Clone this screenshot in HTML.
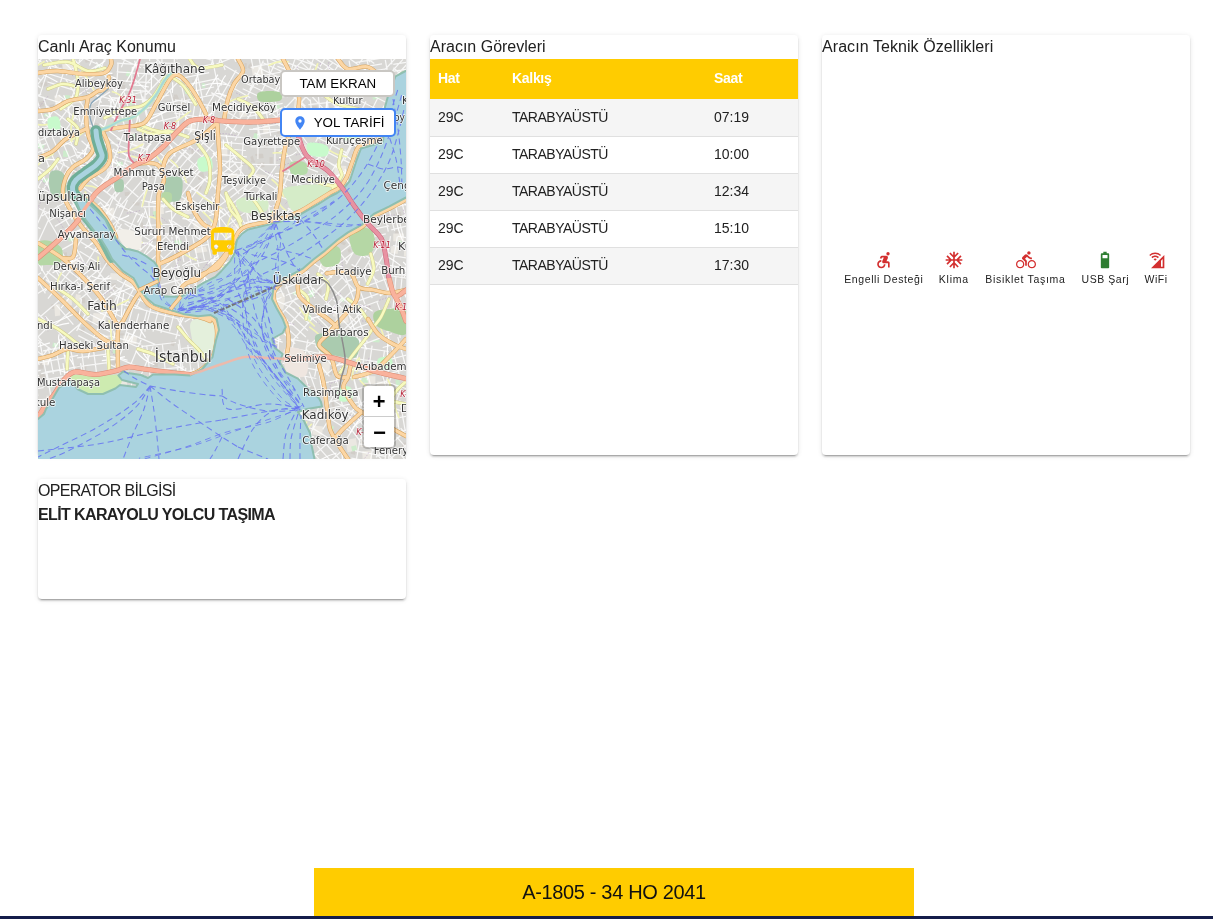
<!DOCTYPE html>
<html lang="tr">
<head>
<meta charset="utf-8">
<title>Araç Bilgisi</title>
<style>
html,body{margin:0;padding:0;}
body{width:1213px;height:919px;position:relative;overflow:hidden;background:#fff;
  font-family:"Liberation Sans",sans-serif;color:#212121;}
.card{position:absolute;background:#fff;border-radius:4px;
  box-shadow:0 3px 1px -2px rgba(0,0,0,.2),0 2px 2px 0 rgba(0,0,0,.14),0 1px 5px 0 rgba(0,0,0,.12);}
.card,#bar{will-change:transform;}
#map{will-change:auto;}
.title{position:absolute;left:0;top:0;height:24px;line-height:24px;font-size:16px;white-space:nowrap;color:#212121;}
#c1{left:38px;top:35px;width:368px;height:420px;}
#c2{left:430px;top:35px;width:368px;height:420px;}
#c3{left:822px;top:35px;width:368px;height:420px;}
#c4{left:38px;top:479px;width:368px;height:120px;}
#map{position:absolute;left:0;top:24px;width:368px;height:400px;overflow:hidden;background:#ddd9d2;}
.mbtn{position:absolute;background:#fff;color:#000;font-size:13.33px;white-space:nowrap;box-sizing:border-box;text-align:center;}
#b1{left:242.3px;top:10.6px;width:115px;height:27.7px;border:2px solid #c9c7c3;border-radius:5px;line-height:23.7px;}
#b2{left:242.1px;top:49px;width:115.5px;height:29.4px;border:2px solid #4285f4;border-radius:5px;}
#b2 svg{position:absolute;left:9.5px;top:4.9px;}
#b2 span{position:absolute;left:31.6px;top:0;line-height:25.4px;}
#zoomc{position:absolute;left:324px;top:325px;width:30px;height:60.5px;border:2px solid rgba(0,0,0,.2);border-radius:5px;background-clip:padding-box;background:#fff;background-clip:padding-box;}
.zb{position:relative;width:30px;height:30px;box-sizing:border-box;text-align:center;font-family:"Liberation Mono",monospace;font-weight:bold;font-size:22px;line-height:30px;color:#000;}
#zin{border-bottom:1px solid #ccc;height:30.5px;}
.zb span{position:absolute;left:0;width:30px;top:2.5px;}
#zout span{top:3px;left:0.5px;}
#thead{position:absolute;left:0;top:24px;width:368px;height:40px;background:#ffcc00;color:#fff;font-size:14px;font-weight:bold;}
#thead span{position:absolute;top:0;line-height:38px;}
.row{position:absolute;left:0;width:368px;height:36px;border-bottom:1px solid #e0e0e0;font-size:14px;color:#212121;}
.row.odd{background:#f5f5f5;}
.row span{position:absolute;top:0;line-height:36px;white-space:nowrap;}
.row.lo span{top:-1px;}
.c-a{left:8px;}.c-b{left:82px;}.c-c{left:284px;}
.row .c-b{letter-spacing:-0.5px;}
#thead span{letter-spacing:-0.3px;}
.feat{position:absolute;top:214.5px;width:120px;margin-left:-60px;text-align:center;font-size:10.5px;color:#212121;white-space:nowrap;}
.feat svg{display:block;margin:0 auto;width:20px;height:20px;}
.feat div{line-height:13px;margin-top:3.5px;}
#bar{position:absolute;left:314px;top:868px;width:600px;height:48px;background:#ffcc00;text-align:center;
  line-height:48px;font-size:20px;color:#111;letter-spacing:-0.34px;}
#foot{position:absolute;left:0;top:916px;width:1213px;height:3px;background:#141d4a;}
</style>
</head>
<body>

<div class="card" id="c1">
  <div class="title">Canlı Araç Konumu</div>
  <div id="map">
    <svg id="mapsvg" width="368" height="400" viewBox="0 0 368 400" style="position:absolute;left:0;top:0;display:block"><rect width="368" height="400" fill="#d8d7d4"/><path d="M229.2 296.7l6.0 1.0l-1.0 6.7l-6.0 -1.0zM339.4 11.6l4.3 0.6l-0.6 6.7l-4.3 -0.6zM331.5 45.3l4.3 0.2l-0.2 3.2l-4.3 -0.2zM211.2 5.2l3.1 1.7l-1.7 3.4l-3.1 -1.7zM281.8 63.8l6.0 0.5l-0.5 2.7l-6.0 -0.5zM46.6 0.7l6.4 -1.1l1.1 3.0l-6.4 1.1zM361.5 349.0l3.4 0.2l-0.2 6.8l-3.4 -0.2zM249.4 81.9l6.7 1.9l-1.9 5.5l-6.7 -1.9zM328.9 119.5l3.8 -1.4l1.4 2.8l-3.8 1.4zM24.0 120.5l5.0 0.7l-0.7 2.0l-5.0 -0.7zM124.3 124.0l6.1 -0.7l0.7 4.4l-6.1 0.7zM177.1 281.9l2.3 -1.9l1.9 6.9l-2.3 1.9zM275.9 338.0l2.1 -0.5l0.5 5.9l-2.1 0.5zM212.9 3.6l2.2 1.8l-1.8 2.9l-2.2 -1.8zM72.3 302.3l6.6 -0.6l0.6 6.7l-6.6 0.6zM130.6 209.9l5.9 1.0l-1.0 2.5l-5.9 -1.0zM293.4 343.9l2.2 -1.6l1.6 6.7l-2.2 1.6zM125.4 244.3l6.6 1.7l-1.7 3.7l-6.6 -1.7zM200.6 125.0l3.6 -1.7l1.7 2.9l-3.6 1.7zM54.8 275.7l7.0 -1.8l1.8 2.8l-7.0 1.8zM363.1 213.4l4.0 0.4l-0.4 3.2l-4.0 -0.4zM304.1 182.3l4.1 1.7l-1.7 2.3l-4.1 -1.7zM12.0 197.4l6.2 0.9l-0.9 2.7l-6.2 -0.9zM349.5 252.2l5.9 -0.3l0.3 2.5l-5.9 0.3zM54.9 337.9l3.5 2.0l-2.0 4.3l-3.5 -2.0zM313.6 390.4l4.3 0.9l-0.9 4.4l-4.3 -0.9zM176.3 116.4l4.0 -0.5l0.5 2.7l-4.0 0.5zM363.7 383.9l5.1 -0.6l0.6 4.5l-5.1 0.6zM32.8 108.9l5.9 -0.6l0.6 6.3l-5.9 0.6zM289.3 310.0l5.5 1.0l-1.0 5.3l-5.5 -1.0zM133.7 281.8l3.4 1.1l-1.1 4.4l-3.4 -1.1zM254.2 117.5l6.7 0.3l-0.3 5.2l-6.7 -0.3zM4.3 218.8l3.3 -0.1l0.1 5.4l-3.3 0.1zM300.5 259.0l6.0 0.6l-0.6 3.7l-6.0 -0.6zM271.5 331.3l3.8 1.5l-1.5 6.2l-3.8 -1.5zM253.3 390.4l6.8 0.1l-0.1 4.6l-6.8 -0.1zM61.2 334.6l6.7 0.8l-0.8 4.4l-6.7 -0.8zM264.8 292.1l2.9 0.3l-0.3 5.9l-2.9 -0.3zM244.9 168.3l5.1 0.5l-0.5 5.9l-5.1 -0.5zM265.1 11.0l2.8 0.6l-0.6 4.2l-2.8 -0.6zM80.6 274.4l5.2 -0.1l0.1 2.2l-5.2 0.1zM83.3 21.7l2.7 -1.3l1.3 3.6l-2.7 1.3zM71.2 14.3l4.3 0.4l-0.4 3.9l-4.3 -0.4zM217.2 95.1l6.5 -0.4l0.4 2.0l-6.5 0.4zM102.5 164.0l2.6 -0.5l0.5 6.2l-2.6 0.5zM13.3 245.4l2.5 -0.6l0.6 4.7l-2.5 0.6zM213.8 383.3l6.1 1.3l-1.3 4.1l-6.1 -1.3zM236.4 147.8l2.7 0.3l-0.3 5.0l-2.7 -0.3zM352.3 387.2l5.0 1.6l-1.6 3.8l-5.0 -1.6zM0.3 43.2l4.8 -1.4l1.4 5.1l-4.8 1.4zM231.6 356.5l3.9 -1.1l1.1 4.2l-3.9 1.1zM107.3 389.0l3.9 1.7l-1.7 6.8l-3.9 -1.7zM219.3 103.9l6.9 -0.3l0.3 4.5l-6.9 0.3zM117.4 393.7l4.5 -0.1l0.1 3.4l-4.5 0.1zM44.9 248.7l4.2 1.1l-1.1 3.5l-4.2 -1.1zM304.3 5.3l4.7 1.7l-1.7 3.4l-4.7 -1.7zM287.7 98.3l3.3 2.0l-2.0 2.8l-3.3 -2.0zM107.9 243.2l4.4 0.4l-0.4 5.2l-4.4 -0.4zM273.6 47.3l5.8 0.1l-0.1 3.5l-5.8 -0.1zM123.7 118.7l4.6 -0.6l0.6 4.3l-4.6 0.6zM274.2 236.3l2.2 -0.2l0.2 3.3l-2.2 0.2zM337.3 355.2l4.7 1.1l-1.1 2.1l-4.7 -1.1zM157.4 230.3l5.5 -0.1l0.1 5.2l-5.5 0.1zM335.5 154.2l4.0 -1.2l1.2 6.3l-4.0 1.2zM109.1 332.0l2.3 0.8l-0.8 6.2l-2.3 -0.8zM159.3 114.5l5.9 -1.4l1.4 6.6l-5.9 1.4zM176.1 219.6l4.5 -1.4l1.4 3.7l-4.5 1.4zM215.6 324.7l2.3 1.3l-1.3 3.2l-2.3 -1.3zM291.4 265.4l2.1 1.9l-1.9 5.6l-2.1 -1.9zM367.4 280.5l2.2 -1.1l1.1 6.2l-2.2 1.1zM237.6 380.9l5.6 -0.8l0.8 2.7l-5.6 0.8zM337.8 59.9l5.1 -1.4l1.4 4.1l-5.1 1.4zM229.0 17.4l2.5 -1.7l1.7 3.9l-2.5 1.7zM21.2 230.1l5.7 -1.5l1.5 6.4l-5.7 1.5zM158.9 125.8l5.0 1.8l-1.8 4.4l-5.0 -1.8zM137.7 22.3l5.5 0.5l-0.5 2.8l-5.5 -0.5zM186.2 364.2l4.8 -0.9l0.9 5.1l-4.8 0.9zM203.0 101.7l5.8 -1.5l1.5 4.6l-5.8 1.5zM86.3 148.5l5.7 0.9l-0.9 2.9l-5.7 -0.9zM241.0 34.1l5.3 -1.5l1.5 2.5l-5.3 1.5zM218.6 95.4l6.4 -0.7l0.7 4.4l-6.4 0.7zM293.1 11.8l5.6 -1.4l1.4 2.3l-5.6 1.4zM350.4 272.4l3.1 1.9l-1.9 2.6l-3.1 -1.9zM244.7 328.2l2.7 -0.6l0.6 5.1l-2.7 0.6zM86.5 133.3l5.1 -0.5l0.5 3.7l-5.1 0.5zM50.2 332.4l5.2 -0.3l0.3 6.0l-5.2 0.3zM313.4 207.0l5.0 1.0l-1.0 4.9l-5.0 -1.0zM145.5 38.8l2.2 -1.8l1.8 3.0l-2.2 1.8zM327.2 192.4l5.8 -0.1l0.1 2.0l-5.8 0.1zM327.4 247.8l4.1 -1.6l1.6 4.3l-4.1 1.6zM56.9 63.6l3.9 1.5l-1.5 3.9l-3.9 -1.5zM56.0 101.6l3.4 -0.9l0.9 2.8l-3.4 0.9zM86.5 192.8l2.2 -0.5l0.5 6.6l-2.2 0.5zM345.2 275.1l5.4 1.8l-1.8 4.4l-5.4 -1.8zM43.4 267.4l3.5 0.9l-0.9 5.4l-3.5 -0.9zM60.1 80.4l2.1 -1.7l1.7 3.2l-2.1 1.7zM147.6 389.4l3.8 -0.1l0.1 3.6l-3.8 0.1zM104.2 292.9l5.6 -1.0l1.0 2.8l-5.6 1.0zM247.4 376.2l5.2 1.9l-1.9 4.2l-5.2 -1.9zM2.3 24.3l5.9 -1.8l1.8 4.1l-5.9 1.8zM201.8 395.8l4.6 -1.6l1.6 3.8l-4.6 1.6zM26.2 359.5l4.5 -1.8l1.8 6.7l-4.5 1.8zM89.6 20.2l4.0 -1.0l1.0 2.3l-4.0 1.0zM149.9 122.4l2.3 1.9l-1.9 2.2l-2.3 -1.9zM66.0 203.5l4.0 -1.7l1.7 4.7l-4.0 1.7zM115.5 43.2l4.7 0.4l-0.4 6.6l-4.7 -0.4zM315.3 85.8l2.1 -0.1l0.1 4.7l-2.1 0.1zM210.3 150.7l5.1 1.7l-1.7 5.6l-5.1 -1.7zM113.2 179.6l6.1 -1.5l1.5 3.1l-6.1 1.5zM114.7 35.1l5.9 -0.7l0.7 6.1l-5.9 0.7zM47.8 32.8l3.2 -0.3l0.3 2.4l-3.2 0.3zM212.3 98.2l2.3 -1.8l1.8 5.5l-2.3 1.8zM73.5 114.4l3.9 -0.3l0.3 2.5l-3.9 0.3zM115.5 300.9l4.8 0.6l-0.6 6.5l-4.8 -0.6zM279.6 229.9l4.2 0.6l-0.6 6.1l-4.2 -0.6zM351.4 291.2l5.5 1.2l-1.2 3.3l-5.5 -1.2zM140.7 52.1l2.3 -0.9l0.9 2.8l-2.3 0.9zM248.7 114.2l2.3 0.2l-0.2 5.8l-2.3 -0.2zM10.1 20.3l2.7 1.4l-1.4 3.8l-2.7 -1.4zM349.3 244.8l3.2 -0.6l0.6 4.1l-3.2 0.6zM121.6 5.0l4.9 0.9l-0.9 6.1l-4.9 -0.9zM35.1 212.1l2.9 -0.2l0.2 5.5l-2.9 0.2zM345.4 317.9l2.6 1.7l-1.7 3.6l-2.6 -1.7zM169.6 173.7l4.2 1.7l-1.7 5.8l-4.2 -1.7zM196.0 387.9l5.0 1.3l-1.3 2.5l-5.0 -1.3zM154.4 20.9l6.9 0.3l-0.3 2.2l-6.9 -0.3zM177.4 352.7l4.0 -0.9l0.9 3.1l-4.0 0.9zM74.0 225.0l3.8 -1.0l1.0 5.8l-3.8 1.0zM129.5 99.3l6.9 1.4l-1.4 6.2l-6.9 -1.4zM227.5 160.3l2.7 -0.0l0.0 6.2l-2.7 0.0zM13.9 67.8l2.5 1.6l-1.6 5.6l-2.5 -1.6zM73.3 318.8l3.6 1.5l-1.5 5.4l-3.6 -1.5zM229.3 320.1l3.9 0.0l-0.0 2.1l-3.9 -0.0zM215.9 73.9l3.9 -1.9l1.9 3.6l-3.9 1.9zM114.8 153.1l4.4 -0.4l0.4 5.5l-4.4 0.4zM361.5 326.2l6.6 0.7l-0.7 5.5l-6.6 -0.7zM197.5 319.5l3.8 0.7l-0.7 5.0l-3.8 -0.7zM192.2 113.7l2.4 -0.6l0.6 2.4l-2.4 0.6zM213.6 303.8l5.6 1.7l-1.7 3.5l-5.6 -1.7zM101.1 286.4l2.4 0.7l-0.7 5.8l-2.4 -0.7zM352.1 358.9l5.4 1.0l-1.0 6.2l-5.4 -1.0zM224.8 83.5l4.6 -1.0l1.0 6.5l-4.6 1.0zM358.7 217.6l4.0 -0.4l0.4 2.0l-4.0 0.4zM65.6 261.2l6.5 0.5l-0.5 6.6l-6.5 -0.5zM142.3 43.6l5.4 0.9l-0.9 4.8l-5.4 -0.9zM137.6 354.7l3.1 -0.9l0.9 3.5l-3.1 0.9zM229.0 358.9l2.8 1.1l-1.1 5.2l-2.8 -1.1zM82.7 25.1l4.8 1.5l-1.5 6.2l-4.8 -1.5zM267.9 166.7l4.1 1.6l-1.6 4.6l-4.1 -1.6zM111.3 112.3l5.0 -1.3l1.3 6.8l-5.0 1.3zM11.2 46.2l4.8 -1.3l1.3 5.0l-4.8 1.3zM70.0 237.8l5.2 0.9l-0.9 5.5l-5.2 -0.9zM22.6 193.9l6.2 -0.7l0.7 6.8l-6.2 0.7zM312.9 258.1l6.6 0.8l-0.8 3.1l-6.6 -0.8zM309.4 190.7l2.5 -1.4l1.4 3.0l-2.5 1.4zM34.2 60.8l5.1 1.0l-1.0 2.5l-5.1 -1.0zM270.9 326.5l6.0 1.7l-1.7 5.6l-6.0 -1.7zM352.1 250.0l6.8 -1.6l1.6 2.5l-6.8 1.6zM23.7 82.6l3.9 0.7l-0.7 4.3l-3.9 -0.7zM273.4 33.5l4.0 -0.5l0.5 4.7l-4.0 0.5zM43.3 238.8l3.9 -0.0l0.0 5.4l-3.9 0.0zM354.3 378.0l2.4 0.9l-0.9 5.8l-2.4 -0.9zM108.9 46.7l4.4 0.9l-0.9 3.8l-4.4 -0.9zM338.0 152.8l3.5 0.8l-0.8 4.5l-3.5 -0.8zM290.4 230.3l3.5 1.4l-1.4 3.7l-3.5 -1.4zM191.1 20.2l4.1 0.7l-0.7 3.2l-4.1 -0.7zM27.0 108.4l2.5 1.9l-1.9 4.4l-2.5 -1.9zM199.2 154.5l6.7 -0.6l0.6 2.5l-6.7 0.6zM298.4 2.0l5.8 -1.9l1.9 3.8l-5.8 1.9zM92.3 183.3l3.9 -1.8l1.8 4.6l-3.9 1.8zM80.4 389.7l4.2 -1.7l1.7 4.4l-4.2 1.7zM102.7 381.9l5.4 -1.8l1.8 4.5l-5.4 1.8zM144.5 311.4l4.2 1.6l-1.6 5.0l-4.2 -1.6zM237.4 254.3l2.2 1.1l-1.1 2.1l-2.2 -1.1zM152.1 349.7l6.1 -0.5l0.5 6.6l-6.1 0.5zM367.7 302.5l6.5 1.1l-1.1 2.7l-6.5 -1.1zM155.3 388.8l7.0 -0.3l0.3 3.1l-7.0 0.3zM99.7 187.9l3.4 -1.5l1.5 5.3l-3.4 1.5zM62.3 183.1l2.4 1.6l-1.6 3.9l-2.4 -1.6zM325.8 78.6l2.1 1.8l-1.8 6.1l-2.1 -1.8zM220.4 54.5l3.2 1.8l-1.8 6.6l-3.2 -1.8zM11.4 73.9l4.1 1.0l-1.0 3.3l-4.1 -1.0zM137.2 310.1l2.8 1.9l-1.9 4.6l-2.8 -1.9zM258.3 36.0l2.6 -0.5l0.5 5.2l-2.6 0.5zM135.7 191.1l4.9 -1.0l1.0 6.8l-4.9 1.0zM209.3 105.2l4.7 -1.5l1.5 5.7l-4.7 1.5zM177.1 282.3l2.0 -0.3l0.3 5.9l-2.0 0.3zM185.5 244.2l6.0 0.0l-0.0 2.3l-6.0 -0.0zM14.1 154.2l3.7 -0.8l0.8 2.1l-3.7 0.8zM165.6 262.0l6.6 0.1l-0.1 3.9l-6.6 -0.1zM262.4 374.9l6.7 -0.8l0.8 6.9l-6.7 0.8zM61.3 372.8l2.4 0.9l-0.9 4.2l-2.4 -0.9zM194.6 155.5l6.6 0.2l-0.2 3.5l-6.6 -0.2zM305.3 55.2l3.8 0.3l-0.3 4.5l-3.8 -0.3zM76.3 181.6l2.3 -0.6l0.6 2.4l-2.3 0.6zM52.9 387.0l3.3 1.1l-1.1 3.4l-3.3 -1.1zM272.7 104.8l6.1 -0.4l0.4 5.1l-6.1 0.4zM231.4 98.3l3.3 -0.2l0.2 6.4l-3.3 0.2zM330.2 70.8l2.7 1.0l-1.0 2.3l-2.7 -1.0zM206.5 3.9l2.2 -0.0l0.0 6.1l-2.2 0.0zM320.6 15.9l4.9 0.9l-0.9 2.6l-4.9 -0.9zM225.0 244.8l3.1 -1.6l1.6 6.7l-3.1 1.6zM23.6 273.6l2.5 -0.2l0.2 2.3l-2.5 0.2zM238.8 356.8l5.6 0.6l-0.6 2.3l-5.6 -0.6zM310.5 48.2l5.8 -0.8l0.8 3.3l-5.8 0.8zM0.6 303.3l4.6 -0.1l0.1 6.5l-4.6 0.1zM57.2 86.6l3.3 -1.2l1.2 6.7l-3.3 1.2zM32.5 141.1l2.4 0.5l-0.5 4.1l-2.4 -0.5zM239.4 69.9l2.7 0.7l-0.7 4.5l-2.7 -0.7zM164.6 229.3l6.6 -0.9l0.9 2.7l-6.6 0.9zM181.7 214.4l6.5 0.6l-0.6 4.8l-6.5 -0.6zM154.4 313.7l6.2 -1.6l1.6 3.5l-6.2 1.6zM95.4 143.0l6.4 0.5l-0.5 3.3l-6.4 -0.5zM235.8 382.5l2.6 -0.7l0.7 5.8l-2.6 0.7zM37.9 252.8l6.2 -1.8l1.8 4.9l-6.2 1.8zM357.7 153.7l5.2 -1.0l1.0 5.6l-5.2 1.0zM150.3 131.7l2.5 0.9l-0.9 2.3l-2.5 -0.9zM151.1 347.9l2.3 -1.3l1.3 3.5l-2.3 1.3zM347.2 316.2l6.5 -1.6l1.6 4.5l-6.5 1.6zM153.1 90.5l2.1 -0.8l0.8 4.8l-2.1 0.8zM39.7 204.6l6.7 -0.1l0.1 6.7l-6.7 0.1zM37.8 307.5l2.6 -1.7l1.7 4.7l-2.6 1.7zM363.3 217.1l4.2 0.2l-0.2 3.4l-4.2 -0.2zM358.0 171.1l3.0 1.7l-1.7 4.6l-3.0 -1.7zM140.5 253.5l6.6 1.2l-1.2 3.6l-6.6 -1.2zM194.7 55.8l2.3 -0.1l0.1 6.7l-2.3 0.1zM163.1 367.0l4.9 -0.9l0.9 4.5l-4.9 0.9zM273.9 102.5l4.4 0.4l-0.4 5.8l-4.4 -0.4zM49.4 81.1l5.5 -1.6l1.6 5.6l-5.5 1.6zM367.1 53.4l2.8 -0.2l0.2 2.4l-2.8 0.2zM228.0 342.9l2.8 -1.6l1.6 5.5l-2.8 1.6zM213.6 100.8l3.8 0.9l-0.9 2.3l-3.8 -0.9zM45.0 305.7l3.7 0.6l-0.6 5.0l-3.7 -0.6zM179.8 349.5l6.6 -0.7l0.7 3.4l-6.6 0.7zM322.7 53.1l4.1 1.9l-1.9 4.1l-4.1 -1.9zM47.2 262.0l5.8 -2.0l2.0 5.6l-5.8 2.0zM347.3 125.0l6.3 -0.3l0.3 5.3l-6.3 0.3zM308.3 270.3l3.7 0.0l-0.0 5.7l-3.7 -0.0zM261.9 245.8l6.0 -0.0l0.0 2.8l-6.0 0.0zM0.4 316.3l5.9 -1.8l1.8 6.2l-5.9 1.8zM197.0 191.4l2.6 1.9l-1.9 3.0l-2.6 -1.9zM313.8 95.3l6.1 -0.5l0.5 5.3l-6.1 0.5zM237.3 91.6l3.4 0.6l-0.6 2.1l-3.4 -0.6zM214.0 297.4l4.5 -0.8l0.8 4.2l-4.5 0.8zM270.6 149.1l5.0 -0.2l0.2 5.8l-5.0 0.2zM252.5 24.6l3.3 -1.4l1.4 6.2l-3.3 1.4zM20.9 5.8l5.8 -0.2l0.2 2.5l-5.8 0.2zM161.3 321.2l4.4 -1.9l1.9 4.6l-4.4 1.9zM292.7 307.0l5.1 0.5l-0.5 6.2l-5.1 -0.5zM263.5 340.4l5.1 1.5l-1.5 2.1l-5.1 -1.5zM364.1 80.5l2.3 -1.6l1.6 3.7l-2.3 1.6zM135.9 35.7l3.1 -0.3l0.3 2.0l-3.1 0.3zM110.4 291.5l3.9 1.8l-1.8 2.8l-3.9 -1.8zM329.2 275.7l3.1 -0.2l0.2 4.0l-3.1 0.2zM150.4 10.5l4.3 0.8l-0.8 5.8l-4.3 -0.8zM316.6 273.2l5.8 1.7l-1.7 6.4l-5.8 -1.7zM291.8 166.4l5.3 1.5l-1.5 5.3l-5.3 -1.5zM262.6 177.4l3.0 -1.0l1.0 3.6l-3.0 1.0zM250.9 307.8l3.0 1.4l-1.4 4.7l-3.0 -1.4zM134.6 37.9l5.0 -1.4l1.4 3.8l-5.0 1.4z" fill="#cfcac4" opacity=".8"/><path d="M87.6 217.7l8.3 0.5l-0.5 10.4l-8.3 -0.5zM24.1 5.3l12.5 -1.1l1.1 7.3l-12.5 1.1zM366.4 188.1l12.5 0.6l-0.6 9.3l-12.5 -0.6zM55.4 253.9l12.8 1.0l-1.0 9.7l-12.8 -1.0zM247.1 25.6l11.8 -0.8l0.8 10.3l-11.8 0.8zM11.4 346.2l9.3 1.5l-1.5 11.5l-9.3 -1.5zM262.8 368.4l8.6 -0.2l0.2 12.2l-8.6 0.2zM344.3 351.5l5.9 -1.1l1.1 6.2l-5.9 1.1zM355.3 174.5l10.6 0.0l-0.0 7.7l-10.6 -0.0zM142.0 140.4l10.3 1.6l-1.6 10.3l-10.3 -1.6zM251.0 371.6l12.7 0.7l-0.7 13.9l-12.7 -0.7zM60.0 344.3l13.7 0.3l-0.3 13.1l-13.7 -0.3zM262.7 84.4l12.5 -0.9l0.9 10.2l-12.5 0.9zM23.4 341.6l13.9 1.2l-1.2 5.8l-13.9 -1.2zM151.0 60.3l7.6 1.5l-1.5 11.9l-7.6 -1.5zM16.3 245.8l5.4 -0.7l0.7 11.5l-5.4 0.7zM324.2 392.3l9.5 -0.8l0.8 14.0l-9.5 0.8zM28.3 239.9l5.3 -0.4l0.4 6.8l-5.3 0.4zM224.7 62.5l5.4 -0.7l0.7 12.8l-5.4 0.7zM352.8 358.7l8.4 0.1l-0.1 9.1l-8.4 -0.1zM237.0 238.3l10.0 1.8l-1.8 10.6l-10.0 -1.8zM186.6 172.5l11.5 -0.8l0.8 7.1l-11.5 0.8zM359.8 208.5l9.9 -0.3l0.3 5.1l-9.9 0.3zM213.4 8.0l10.5 -1.8l1.8 10.7l-10.5 1.8zM230.9 186.5l11.1 0.8l-0.8 8.2l-11.1 -0.8zM271.6 8.9l5.5 1.9l-1.9 11.1l-5.5 -1.9zM92.4 182.5l10.3 -0.5l0.5 7.9l-10.3 0.5zM115.1 147.7l10.4 -0.5l0.5 7.7l-10.4 0.5zM284.2 10.8l10.1 -0.8l0.8 11.6l-10.1 0.8zM81.9 321.5l7.1 -0.3l0.3 6.7l-7.1 0.3zM256.9 40.7l7.9 1.3l-1.3 8.0l-7.9 -1.3zM161.3 342.2l6.5 0.6l-0.6 8.0l-6.5 -0.6zM325.6 180.4l7.0 0.1l-0.1 6.1l-7.0 -0.1zM70.2 322.7l12.5 -0.9l0.9 6.7l-12.5 0.9zM297.1 256.8l12.3 -1.5l1.5 8.1l-12.3 1.5zM107.4 317.5l7.4 -0.3l0.3 8.1l-7.4 0.3zM154.5 163.8l13.3 -2.0l2.0 6.4l-13.3 2.0zM347.1 352.0l13.9 1.8l-1.8 8.9l-13.9 -1.8zM341.3 88.8l11.7 0.7l-0.7 12.5l-11.7 -0.7zM191.0 115.6l8.1 -1.7l1.7 7.0l-8.1 1.7zM216.6 114.8l12.3 1.6l-1.6 5.4l-12.3 -1.6zM255.3 369.5l13.1 0.3l-0.3 13.1l-13.1 -0.3zM4.8 298.1l6.5 0.7l-0.7 7.7l-6.5 -0.7zM193.2 165.5l13.5 -0.6l0.6 10.5l-13.5 0.6zM92.9 344.7l9.3 -0.6l0.6 12.0l-9.3 0.6zM72.6 213.9l12.4 1.2l-1.2 6.5l-12.4 -1.2zM339.2 322.4l12.4 0.5l-0.5 5.1l-12.4 -0.5zM317.4 20.0l7.4 0.1l-0.1 7.4l-7.4 -0.1zM155.7 189.2l12.0 -1.8l1.8 5.0l-12.0 1.8zM46.7 49.9l5.6 1.4l-1.4 13.8l-5.6 -1.4zM31.7 200.8l7.8 -0.6l0.6 7.8l-7.8 0.6zM238.1 234.6l8.2 -0.7l0.7 6.7l-8.2 0.7zM45.5 222.2l11.4 -1.7l1.7 8.4l-11.4 1.7zM65.7 149.3l10.4 -0.5l0.5 12.0l-10.4 0.5zM294.8 249.2l8.9 -0.0l0.0 8.4l-8.9 0.0zM258.7 168.2l11.2 -1.0l1.0 9.1l-11.2 1.0zM197.2 278.1l5.6 -0.3l0.3 8.8l-5.6 0.3zM323.7 374.6l8.4 1.2l-1.2 13.1l-8.4 -1.2zM96.5 185.7l6.1 0.6l-0.6 12.3l-6.1 -0.6zM326.5 317.0l11.0 0.3l-0.3 11.6l-11.0 -0.3zM38.0 235.1l5.0 1.1l-1.1 6.3l-5.0 -1.1zM16.3 36.7l5.9 -1.3l1.3 12.9l-5.9 1.3zM8.6 336.6l6.1 0.7l-0.7 12.6l-6.1 -0.7zM307.7 381.0l10.2 -1.9l1.9 12.2l-10.2 1.9zM282.4 204.5l11.4 1.0l-1.0 6.0l-11.4 -1.0zM343.9 24.5l7.9 1.3l-1.3 10.1l-7.9 -1.3zM89.1 71.9l7.2 1.0l-1.0 10.5l-7.2 -1.0zM144.9 147.0l8.6 -0.3l0.3 8.2l-8.6 0.3zM30.6 200.1l13.8 1.0l-1.0 8.7l-13.8 -1.0zM59.1 276.3l11.8 0.1l-0.1 11.1l-11.8 -0.1zM178.0 257.2l13.1 -1.6l1.6 6.3l-13.1 1.6zM275.3 366.6l9.7 0.9l-0.9 9.0l-9.7 -0.9zM68.5 106.9l6.8 -0.7l0.7 10.3l-6.8 0.7zM85.5 276.5l13.6 0.8l-0.8 7.7l-13.6 -0.8zM152.1 341.5l10.3 -1.1l1.1 7.4l-10.3 1.1zM8.5 191.8l8.4 -0.6l0.6 6.6l-8.4 0.6zM118.5 309.7l6.3 -0.1l0.1 13.9l-6.3 0.1zM220.4 187.2l12.5 0.2l-0.2 12.4l-12.5 -0.2zM177.1 288.3l12.7 0.9l-0.9 8.6l-12.7 -0.9zM353.4 187.0l7.1 0.9l-0.9 7.1l-7.1 -0.9zM248.5 383.5l12.7 -1.2l1.2 7.2l-12.7 1.2zM95.2 74.9l11.3 1.6l-1.6 12.7l-11.3 -1.6zM93.8 346.0l7.8 0.9l-0.9 8.8l-7.8 -0.9zM31.6 37.1l12.5 -0.6l0.6 7.6l-12.5 0.6zM213.6 270.2l5.1 -0.3l0.3 8.0l-5.1 0.3zM178.8 84.0l10.3 -0.4l0.4 13.6l-10.3 0.4zM200.3 47.7l7.5 -1.5l1.5 11.0l-7.5 1.5zM326.5 363.5l5.9 -0.5l0.5 13.5l-5.9 0.5zM284.3 302.9l7.7 0.6l-0.6 11.1l-7.7 -0.6zM296.6 106.2l11.8 0.7l-0.7 13.7l-11.8 -0.7z" fill="#ebe8e2"/><path d="M166.5 223.9l6.7 0.0l-0.0 4.6l-6.7 -0.0zM216.2 73.9l4.8 1.2l-1.2 5.3l-4.8 -1.2zM34.6 121.4l2.9 0.8l-0.8 6.1l-2.9 -0.8zM15.4 392.9l6.8 0.5l-0.5 5.4l-6.8 -0.5zM58.0 6.0l4.9 -1.2l1.2 2.8l-4.9 1.2zM89.0 12.0l4.6 1.4l-1.4 4.5l-4.6 -1.4zM191.0 256.1l4.7 -0.2l0.2 5.5l-4.7 0.2zM102.4 399.1l7.0 0.8l-0.8 6.3l-7.0 -0.8zM116.0 91.9l3.8 1.1l-1.1 2.8l-3.8 -1.1zM147.3 338.6l4.2 1.4l-1.4 6.8l-4.2 -1.4zM0.2 83.9l6.6 1.9l-1.9 4.6l-6.6 -1.9zM146.3 29.2l5.3 -0.9l0.9 6.0l-5.3 0.9zM32.1 133.0l6.8 -1.5l1.5 5.9l-6.8 1.5zM90.7 40.4l2.8 -1.3l1.3 6.1l-2.8 1.3zM205.8 179.0l3.4 -1.5l1.5 5.8l-3.4 1.5zM236.9 46.6l4.4 -0.9l0.9 3.5l-4.4 0.9zM357.3 321.4l3.9 -1.2l1.2 6.5l-3.9 1.2zM145.1 341.8l5.4 2.0l-2.0 3.0l-5.4 -2.0zM78.5 103.3l6.0 -0.8l0.8 4.0l-6.0 0.8zM27.0 36.0l5.1 0.4l-0.4 3.6l-5.1 -0.4zM136.8 181.3l6.8 0.3l-0.3 4.7l-6.8 -0.3zM318.9 73.1l3.2 1.3l-1.3 6.6l-3.2 -1.3zM91.8 75.9l5.8 -1.2l1.2 6.7l-5.8 1.2zM349.6 352.9l5.2 -1.6l1.6 4.4l-5.2 1.6zM14.2 385.1l3.6 -1.0l1.0 5.7l-3.6 1.0zM303.1 238.6l3.8 0.9l-0.9 3.3l-3.8 -0.9zM25.3 91.4l5.0 0.5l-0.5 6.3l-5.0 -0.5zM103.1 366.9l3.4 -0.9l0.9 2.6l-3.4 0.9zM164.0 24.2l3.3 0.3l-0.3 4.2l-3.3 -0.3zM48.4 144.9l6.5 0.6l-0.6 6.9l-6.5 -0.6zM254.4 233.8l3.1 -1.9l1.9 2.7l-3.1 1.9zM335.0 280.4l6.8 0.5l-0.5 2.6l-6.8 -0.5zM177.5 292.2l3.9 -1.7l1.7 7.0l-3.9 1.7zM201.0 294.8l6.6 0.8l-0.8 5.8l-6.6 -0.8zM291.9 366.0l4.1 1.6l-1.6 5.6l-4.1 -1.6zM320.6 166.9l6.1 0.3l-0.3 6.4l-6.1 -0.3zM230.0 152.9l5.1 -1.7l1.7 5.2l-5.1 1.7zM235.3 397.3l6.5 -0.4l0.4 5.8l-6.5 0.4zM270.5 232.4l4.5 -1.7l1.7 6.3l-4.5 1.7zM276.1 11.9l5.2 -1.1l1.1 4.7l-5.2 1.1zM257.0 198.9l5.3 -1.0l1.0 6.6l-5.3 1.0zM4.2 120.4l5.6 -1.3l1.3 3.4l-5.6 1.3zM333.3 264.0l4.5 -0.7l0.7 6.5l-4.5 0.7zM245.1 79.4l4.4 1.7l-1.7 6.1l-4.4 -1.7zM323.9 153.8l5.1 -1.5l1.5 3.9l-5.1 1.5zM182.7 334.8l6.3 1.8l-1.8 5.7l-6.3 -1.8zM101.9 67.7l4.5 -1.1l1.1 3.7l-4.5 1.1zM152.3 250.3l4.7 1.4l-1.4 3.9l-4.7 -1.4zM361.4 181.0l2.8 1.5l-1.5 2.6l-2.8 -1.5zM15.3 283.5l5.1 1.2l-1.2 3.9l-5.1 -1.2zM7.0 54.4l4.5 1.3l-1.3 2.6l-4.5 -1.3zM87.4 56.3l2.7 -0.2l0.2 5.3l-2.7 0.2zM231.8 262.0l6.1 0.7l-0.7 6.8l-6.1 -0.7zM73.4 190.1l3.3 -0.1l0.1 2.5l-3.3 0.1zM262.8 71.6l3.7 0.8l-0.8 4.1l-3.7 -0.8zM191.5 245.8l5.9 1.2l-1.2 4.3l-5.9 -1.2zM333.5 34.9l6.7 -1.5l1.5 5.8l-6.7 1.5zM166.9 250.2l6.6 0.3l-0.3 4.2l-6.6 -0.3zM323.6 318.7l6.7 0.6l-0.6 4.6l-6.7 -0.6zM75.4 288.8l6.2 0.9l-0.9 5.4l-6.2 -0.9zM78.5 360.0l6.9 0.1l-0.1 6.9l-6.9 -0.1zM291.0 128.2l6.6 -0.6l0.6 6.4l-6.6 0.6zM30.5 176.4l5.0 -0.1l0.1 6.0l-5.0 0.1zM10.5 323.7l2.8 -1.3l1.3 6.1l-2.8 1.3zM123.3 315.2l3.1 0.1l-0.1 3.2l-3.1 -0.1zM266.3 336.0l5.6 -0.0l0.0 6.8l-5.6 0.0zM349.3 34.4l3.5 -0.8l0.8 4.9l-3.5 0.8zM268.2 255.5l4.9 0.2l-0.2 6.3l-4.9 -0.2zM114.7 152.5l6.3 -1.2l1.2 6.6l-6.3 1.2zM313.1 387.4l4.9 -1.2l1.2 5.1l-4.9 1.2z" fill="#cdeccc"/><path d="M9.5 -9.6L-5.1 12.8M4.7 -18.5L-12.5 7.8M-5.4 -19.2L-20.8 4.3M-9.7 -29.0L-29.8 1.9M5.4 -10.4L-23.0 -28.9M3.4 2.9L-29.2 -18.4M-3.1 13.2L-35.4 -7.9M29.3 -32.3L54.0 -6.6M25.4 -23.5L46.7 -1.3M20.6 -15.6L42.8 7.5M8.5 -15.4L35.5 12.8M3.6 -7.7L25.5 15.1M30.6 -28.9L8.5 -7.8M39.8 -16.4L17.1 5.3M50.7 -5.6L28.1 16.1M52.5 -30.5L77.5 -19.6M51.0 -23.0L78.5 -11.0M45.2 -17.4L76.1 -3.9M45.3 -9.2L68.1 0.8M35.4 -5.4L69.5 9.5M55.4 -30.5L41.0 2.6M67.3 -29.7L51.5 6.6M75.3 -19.9L61.7 11.4M81.6 -32.2L110.7 -18.8M78.9 -23.1L110.0 -8.8M73.7 -15.1L104.0 -1.2M74.6 -4.4L103.0 8.7M85.3 -24.4L72.2 4.1M97.7 -23.2L83.3 8.3M106.6 -14.3L94.4 12.4M109.8 -34.0L138.4 -33.7M111.9 -24.5L140.3 -24.2M104.6 -15.1L135.8 -14.8M107.7 -5.5L144.8 -5.2M107.8 3.9L141.9 4.3M111.9 -27.9L111.6 1.9M124.3 -35.2L123.9 4.0M136.6 -29.6L136.3 3.6M188.1 -21.0L180.5 5.8M180.8 -20.6L173.3 5.7M168.9 -29.5L161.0 -1.7M161.2 -27.7L153.1 0.8M154.9 -30.9L147.0 -2.9M147.7 -31.0L138.8 0.5M186.0 -18.0L153.2 -27.3M178.8 -8.7L148.9 -17.2M173.7 1.1L148.0 -6.2M207.8 -6.8L178.1 5.3M210.9 -18.3L176.8 -4.4M199.5 -23.9L175.8 -14.2M197.2 -33.1L170.2 -22.1M210.2 -1.2L197.0 -33.6M197.8 2.7L185.3 -28.0M187.2 11.1L172.6 -24.8M239.9 -27.1L247.3 11.9M225.1 -21.3L231.8 14.0M217.9 -17.7L224.4 16.9M210.6 -14.3L215.2 9.8M242.9 -28.6L211.1 -22.6M244.7 -18.5L206.7 -11.3M248.9 -8.9L209.1 -1.3M246.1 2.1L212.6 8.4M251.4 11.5L213.7 18.6M251.2 -31.3L279.6 -21.1M249.1 -24.9L275.0 -15.6M245.6 -11.8L278.8 0.0M238.7 -7.1L275.8 6.1M235.2 -1.3L272.7 12.2M239.4 7.4L267.7 17.5M249.1 -28.8L238.5 0.8M264.8 -21.7L253.9 8.8M280.5 -14.5L269.8 15.4M287.6 -28.9L316.8 -10.5M282.7 -25.0L313.2 -5.8M277.8 -21.1L308.6 -1.7M272.9 -17.2L300.4 0.1M276.3 -8.0L303.8 9.3M273.9 -2.6L298.0 12.6M269.1 1.4L294.7 17.5M285.7 -26.5L268.7 0.4M297.2 -16.9L281.7 7.8M313.1 -14.4L294.7 14.9M349.3 -21.9L330.9 3.2M344.5 -27.7L321.1 4.5M337.3 -30.0L315.8 -0.5M331.0 -33.5L312.6 -8.3M325.9 -38.8L304.8 -9.9M353.6 -21.6L324.6 -42.8M346.5 -13.8L317.3 -35.1M342.8 -3.6L313.8 -24.7M336.3 4.6L306.9 -16.9M328.4 11.8L301.3 -8.0M392.3 6.6L354.4 12.4M383.4 1.0L355.3 5.3M389.3 -6.8L351.4 -1.1M384.9 -13.0L353.9 -8.4M386.7 -20.2L356.0 -15.6M380.0 -26.2L352.6 -22.0M386.7 -34.1L352.7 -29.0M388.7 1.7L384.3 -27.5M372.3 10.0L367.2 -23.9M353.9 5.4L349.9 -21.6M-17.1 5.5L3.2 21.5M-27.1 5.5L2.6 28.9M-29.5 11.4L-0.1 34.5M-29.3 19.4L-9.5 35.0M-35.8 22.1L-9.8 42.5M-37.0 28.9L-12.2 48.4M-15.7 1.6L-34.8 25.9M-5.9 10.8L-26.0 36.4M6.1 17.3L-17.2 46.9M7.4 5.2L46.0 17.3M5.4 13.1L36.8 23.0M9.4 22.8L36.4 31.3M0.2 36.9L31.4 46.7M10.8 7.9L1.8 36.6M26.1 11.6L17.6 38.7M42.4 12.1L32.3 44.1M72.0 32.9L51.3 46.1M68.9 26.2L46.2 40.7M63.1 21.2L40.6 35.7M65.0 11.4L38.7 28.2M59.6 6.2L30.6 24.8M78.4 34.4L58.4 3.2M63.5 43.7L44.1 13.4M47.8 51.6L27.9 20.6M78.9 4.2L108.8 6.2M78.6 12.9L113.5 15.1M76.6 21.4L112.4 23.7M76.2 30.1L111.6 32.4M73.7 38.6L112.3 41.1M80.1 4.3L78.1 35.8M94.4 7.9L92.4 38.8M108.9 6.6L106.6 43.6M140.2 22.7L118.3 46.0M137.5 14.8L117.5 36.1M133.7 8.2L107.8 35.7M125.9 5.8L107.0 25.9M120.7 0.6L97.2 25.6M142.4 22.3L116.1 -2.4M130.5 31.6L105.4 8.0M120.1 42.2L95.1 18.8M176.0 35.7L145.3 42.0M176.1 28.0L150.1 33.3M181.1 19.3L141.6 27.4M171.2 13.6L140.5 19.9M176.2 4.9L142.0 11.9M181.2 33.4L174.5 0.9M164.8 41.7L158.5 10.8M147.2 44.0L140.7 12.1M216.3 24.9L201.3 50.9M202.4 18.9L188.1 43.9M198.3 11.1L183.8 36.3M220.0 25.9L186.4 6.5M212.3 38.7L178.1 19.0M200.9 49.4L173.3 33.6M220.6 -5.5L254.5 10.4M224.0 3.2L251.8 16.3M220.4 8.6L248.2 21.7M216.5 13.9L244.0 26.9M215.5 20.6L241.2 32.7M207.9 24.2L241.6 40.0M204.7 29.8L235.9 44.5M225.4 1.6L211.7 30.7M237.9 2.5L222.1 36.1M245.6 13.6L232.1 42.5M262.7 2.8L282.3 21.4M256.5 6.9L276.9 26.2M253.8 14.4L273.9 33.4M245.0 16.1L272.6 42.2M240.6 21.9L267.5 47.3M265.8 0.1L241.6 25.7M275.8 9.5L248.7 38.1M283.6 21.2L260.0 46.2M318.9 30.2L291.0 55.7M312.7 23.7L291.1 43.5M307.5 16.4L283.6 38.3M299.6 11.6L278.2 31.2M294.7 3.9L270.8 25.8M319.7 25.9L295.3 -0.7M313.0 33.9L289.4 8.1M305.1 40.6L285.2 18.9M298.5 48.8L276.7 25.0M288.1 52.8L266.8 29.5M349.4 32.2L316.0 37.9M352.4 26.0L318.5 31.8M345.7 21.5L312.6 27.1M349.6 9.5L312.5 15.8M344.0 4.8L310.7 10.5M342.6 -0.7L317.0 3.7M352.0 28.0L347.3 0.8M334.7 33.6L328.7 -1.8M317.8 40.5L311.1 1.7M393.5 15.7L371.0 39.9M384.2 16.5L366.2 35.9M380.9 10.8L360.4 32.9M373.9 9.2L355.0 29.6M374.4 -0.6L352.3 23.2M365.0 0.4L347.2 19.6M360.8 -4.3L343.3 14.5M387.7 17.9L365.5 -2.7M378.0 29.7L355.5 8.8M368.7 41.8L340.0 15.2M5.3 37.9L14.0 64.2M-2.2 37.4L6.7 64.3M-9.9 36.3L0.9 69.1M-15.9 40.5L-4.9 73.7M-22.4 43.0L-12.1 74.0M-30.1 41.9L-19.7 73.4M-36.6 44.5L-23.9 83.0M3.3 35.2L-28.4 45.6M7.4 51.2L-23.4 61.3M13.6 66.5L-20.4 77.7M20.6 36.3L45.8 55.3M17.9 44.0L40.0 60.7M7.3 45.7L36.0 67.4M7.4 55.5L35.0 76.4M3.9 62.6L26.2 79.4M23.7 40.7L6.5 63.5M34.8 43.8L11.5 74.6M41.3 52.8L23.3 76.7M49.0 33.3L78.3 41.7M46.3 48.7L72.4 56.2M43.4 64.1L69.7 71.6M52.1 35.4L42.8 67.5M64.8 32.4L53.3 72.3M74.2 40.7L65.2 72.0M102.0 30.7L110.4 64.5M94.1 31.6L103.0 67.6M86.3 33.4L95.1 68.6M79.6 39.3L88.2 74.0M72.0 41.4L79.4 71.4M106.4 32.5L70.1 41.5M110.6 48.2L74.6 57.1M110.7 64.8L80.2 72.3M140.2 57.6L106.4 65.9M141.5 49.3L109.3 57.3M141.4 41.4L106.6 50.0M131.3 36.0L103.9 42.7M141.7 70.2L131.9 30.3M127.8 72.3L119.5 38.8M114.4 76.6L104.7 37.4M177.9 41.5L172.6 73.7M170.1 47.6L165.6 75.0M163.4 46.7L159.5 70.6M158.2 37.1L152.3 73.3M150.6 41.8L145.3 74.3M144.2 39.3L138.7 72.9M176.8 47.4L136.9 40.9M171.4 59.8L135.9 54.0M172.7 73.3L136.0 67.3M213.5 53.5L196.9 81.5M210.5 45.2L192.5 75.3M202.6 45.1L186.9 71.3M196.0 42.7L182.9 64.6M184.8 34.6L167.5 63.7M182.6 24.9L163.8 56.5M207.4 49.8L180.5 33.7M205.6 62.7L173.9 43.8M201.0 74.0L172.0 56.7M245.0 77.5L216.4 82.8M248.4 70.2L219.1 75.7M245.6 64.1L215.2 69.8M243.2 57.9L216.8 62.9M249.2 50.2L209.2 57.6M244.7 44.4L214.6 50.0M246.9 37.4L211.6 44.0M243.6 75.5L237.2 41.2M232.8 77.1L226.0 40.2M222.2 79.1L216.2 47.0M279.0 59.3L255.7 83.5M275.8 51.8L251.2 77.4M267.6 49.6L250.1 67.7M267.2 39.1L240.5 66.8M261.4 34.3L236.9 59.7M278.5 59.6L253.7 35.7M271.8 71.8L246.2 47.1M263.0 82.0L234.5 54.5M305.6 37.2L309.0 70.7M297.0 35.9L300.1 65.9M288.8 37.1L292.6 74.3M280.4 37.7L284.1 73.3M272.3 40.5L275.4 70.9M309.5 41.6L270.3 45.6M308.6 52.8L271.7 56.6M306.9 64.0L277.6 67.0M353.3 52.2L338.2 82.0M346.1 46.5L330.7 77.0M339.5 39.5L325.0 68.3M328.0 42.4L314.8 68.6M323.7 30.9L308.1 61.8M358.2 48.5L325.0 31.7M349.8 55.8L320.5 41.0M343.8 64.4L318.9 51.8M341.2 74.7L312.8 60.3M336.1 83.7L302.3 66.6M378.8 35.2L391.7 57.9M371.8 35.1L390.2 67.1M368.4 41.2L383.5 67.5M363.2 44.2L377.9 69.9M356.5 44.5L371.9 71.3M353.1 50.7L365.6 72.5M374.3 33.9L345.6 50.4M381.6 48.9L352.4 65.7M389.3 63.8L361.2 79.8M5.4 103.3L-24.5 114.0M9.2 96.0L-27.1 109.1M10.2 89.8L-26.3 102.9M8.1 84.6L-24.3 96.3M1.2 81.2L-29.2 92.1M4.2 74.2L-35.0 88.4M10.8 107.5L-2.0 72.2M-2.6 116.3L-14.0 84.6M-17.5 121.1L-28.9 89.4M27.7 71.2L39.8 99.5M20.9 74.3L34.3 105.4M13.2 75.4L27.0 107.3M5.2 75.4L20.3 110.7M-0.5 81.1L10.2 106.0M29.8 69.5L-0.0 82.3M35.2 82.1L7.4 94.1M38.1 95.8L9.2 108.2M60.3 70.1L80.7 88.3M55.5 74.7L79.4 96.0M46.7 75.7L76.5 102.2M43.5 81.8L69.0 104.5M43.8 90.9L63.5 108.4M39.4 95.9L61.9 115.9M34.4 100.3L58.5 121.7M61.0 74.9L39.9 98.5M71.5 79.1L48.6 104.8M76.3 89.7L53.3 115.5M78.5 79.4L109.3 90.9M73.0 83.6L104.5 95.2M76.6 91.1L107.9 102.7M75.7 97.0L98.5 105.4M66.1 99.6L98.9 111.8M72.3 108.1L99.0 118.0M85.4 74.7L74.1 105.1M95.7 79.6L84.3 110.4M106.1 84.2L93.1 119.3M153.4 95.1L129.0 124.6M148.5 91.0L126.9 117.0M144.0 86.4L118.2 117.4M134.5 87.7L117.3 108.6M134.6 77.6L110.0 107.3M128.8 74.6L106.1 101.9M123.7 70.7L100.3 98.9M153.4 98.0L124.4 74.0M138.2 107.6L115.7 88.9M128.9 122.1L103.6 101.1M181.9 89.5L158.6 116.1M175.9 83.9L151.1 112.3M170.7 77.3L150.1 100.9M159.3 77.8L140.2 99.8M154.0 71.4L133.1 95.3M178.9 95.8L155.0 74.9M168.6 101.6L145.7 81.6M163.6 111.9L136.8 88.5M176.7 76.1L211.7 79.2M178.6 82.6L211.0 85.5M179.8 89.0L207.9 91.5M175.1 94.9L208.9 97.9M178.3 101.4L206.4 104.0M170.6 113.3L209.1 116.8M182.2 77.8L179.5 108.2M193.6 82.0L191.0 111.1M205.6 79.8L202.5 114.9M245.6 73.0L245.4 103.9M237.1 76.0L236.9 105.3M220.1 69.9L219.9 100.1M243.9 70.5L211.1 70.3M246.0 88.1L212.6 87.8M241.9 105.6L209.6 105.3M282.8 97.5L255.5 117.2M281.7 86.9L253.2 107.5M270.9 71.9L240.7 93.6M264.9 64.8L234.6 86.7M278.7 97.5L261.8 74.0M269.1 103.7L251.5 79.4M262.8 114.5L242.6 86.5M287.3 64.0L319.0 80.6M285.9 72.6L314.5 87.6M278.9 78.3L308.6 93.9M275.0 85.6L301.1 99.3M270.6 92.7L299.0 107.5M289.3 60.6L271.1 95.5M301.9 71.5L285.0 103.7M314.7 82.0L302.4 105.4M350.1 85.6L335.5 116.0M342.1 83.5L328.8 111.1M337.1 75.0L320.9 108.7M329.7 71.7L314.4 103.5M320.4 72.2L306.9 100.4M348.9 82.0L322.0 69.0M343.5 99.3L312.0 84.1M333.9 114.6L304.5 100.4M347.1 77.7L377.1 85.5M342.0 84.7L376.8 93.7M339.4 92.4L375.0 101.6M340.6 101.0L376.2 110.3M342.8 110.0L368.6 116.7M351.2 80.4L343.1 111.6M363.4 81.9L355.4 112.8M374.4 88.2L365.9 120.9M15.2 113.2L-3.6 146.7M6.3 117.0L-9.0 144.4M2.1 112.5L-12.0 137.8M-3.4 110.4L-16.1 133.1M-7.2 105.1L-21.5 130.8M-17.5 99.6L-33.7 128.6M9.4 113.8L-13.6 100.9M2.4 129.5L-26.4 113.4M-6.7 144.2L-33.8 129.0M49.8 120.2L33.3 148.9M46.3 115.0L27.3 147.9M42.1 110.9L23.3 143.5M35.3 111.2L21.6 135.0M30.1 109.0L15.2 134.8M25.4 105.8L11.3 130.3M18.6 106.3L6.8 126.8M47.5 118.3L19.0 102.0M38.5 131.1L14.4 117.3M33.6 146.3L4.2 129.4M56.1 113.9L81.5 131.6M48.0 119.1L77.7 139.9M41.2 125.2L70.7 145.9M56.6 106.1L36.9 134.3M71.8 112.6L52.1 140.8M83.3 124.3L64.9 150.6M112.3 126.2L89.9 152.4M105.9 119.3L80.9 148.6M100.7 111.0L76.9 138.8M88.7 110.7L69.4 133.2M82.7 103.3L59.7 130.2M113.1 126.6L86.8 104.0M100.5 138.2L72.1 113.9M88.2 150.1L62.8 128.3M139.7 120.8L132.8 150.8M134.0 113.4L125.7 148.9M126.7 112.4L119.4 143.6M118.9 113.8L112.2 142.3M112.5 109.1L103.4 148.3M139.0 120.9L107.7 113.6M141.5 135.7L107.8 127.9M137.7 149.1L102.9 141.1M185.2 127.0L165.9 153.8M173.6 127.1L155.2 152.6M167.6 119.3L148.6 145.7M161.6 111.6L142.6 138.0M154.5 105.4L135.0 132.6M179.1 130.1L153.1 111.4M174.6 143.3L145.8 122.5M167.6 154.7L138.5 133.7M218.4 125.6L188.6 149.1M211.9 123.2L190.0 140.4M211.6 115.9L186.5 135.6M203.2 114.9L175.8 136.5M204.8 106.2L177.3 127.8M198.1 103.8L169.9 126.0M196.2 97.8L166.2 121.4M212.3 124.4L194.1 101.2M201.2 134.9L179.3 107.0M190.3 145.7L167.8 117.2M218.0 106.8L248.8 127.8M216.9 116.2L239.4 131.6M206.6 119.3L232.7 137.1M205.7 128.9L231.9 146.7M224.3 104.2L205.2 132.2M238.1 106.8L218.2 136.1M246.6 117.3L229.5 142.3M254.0 102.7L280.1 113.2M248.7 110.5L278.0 122.2M246.6 119.5L272.9 130.0M239.8 126.7L269.0 138.4M241.9 137.4L268.9 148.2M255.5 102.7L242.6 134.9M267.5 106.6L254.7 138.6M277.8 115.0L264.8 147.5M324.0 120.5L305.1 150.2M316.4 118.4L297.7 147.8M308.3 117.3L290.0 146.1M301.0 114.8L283.3 142.8M298.8 104.5L279.0 135.7M324.1 124.5L292.5 104.5M316.8 140.1L288.3 122.0M308.3 154.9L279.5 136.6M346.2 102.1L352.5 135.5M340.7 108.9L345.6 134.5M333.8 107.7L339.8 139.6M327.8 111.9L332.7 137.9M320.2 107.6L327.2 144.2M314.2 111.2L320.7 145.9M307.1 109.8L314.4 148.2M345.7 108.2L307.6 115.4M343.9 121.5L312.6 127.4M347.5 133.8L315.7 139.8M361.0 106.0L392.0 118.4M356.4 112.3L387.0 124.5M349.5 125.8L379.0 137.5M345.4 132.3L379.0 145.7M362.4 102.9L350.2 133.6M374.7 109.9L363.8 137.2M386.4 118.3L375.0 146.9M12.1 157.3L-2.1 188.1M6.8 148.8L-9.3 183.5M-2.1 147.8L-16.3 178.5M-9.9 144.6L-26.1 179.4M-16.6 138.9L-31.4 170.9M16.3 156.7L-19.5 140.1M2.5 169.8L-28.1 155.6M-1.3 187.5L-32.1 173.2M53.3 164.0L23.9 181.3M43.6 160.7L21.2 173.9M41.1 153.1L16.9 167.4M38.5 145.7L9.0 163.0M32.8 140.0L3.9 157.0M48.7 167.2L32.8 140.1M38.1 178.4L19.3 146.6M22.3 180.9L5.7 152.7M62.7 143.8L81.4 164.9M54.4 145.4L78.5 172.8M47.7 148.9L72.5 177.0M45.5 157.5L68.0 182.9M40.8 163.3L60.1 185.1M63.1 143.0L41.1 162.5M74.2 149.6L50.0 171.1M79.4 161.6L52.1 185.7M111.9 158.8L98.6 188.6M107.6 151.4L95.3 178.9M99.2 153.2L85.4 184.3M89.5 140.8L72.9 178.2M82.9 138.6L69.7 168.4M76.1 136.9L62.1 168.4M108.6 158.8L77.8 145.1M105.6 170.4L69.6 154.5M94.9 178.6L64.8 165.3M143.2 174.4L106.0 175.7M139.3 165.2L105.0 166.5M141.0 146.6L104.5 147.9M134.4 177.0L133.1 142.4M123.3 176.6L121.9 137.7M112.0 172.1L110.9 142.0M153.0 128.9L185.1 150.6M148.5 137.2L179.9 158.5M140.7 154.8L167.3 172.8M134.8 162.3L164.7 182.5M153.2 131.8L132.6 162.2M166.8 143.4L147.2 172.4M180.7 154.7L162.9 181.1M199.9 141.6L217.4 165.2M189.0 140.6L213.4 173.4M185.5 149.4L205.9 176.9M179.5 155.0L200.1 182.7M174.8 162.2L189.2 181.6M197.8 134.6L172.3 153.6M204.6 142.4L175.8 163.8M208.7 152.2L182.4 171.7M216.4 159.2L186.1 181.7M221.9 167.9L193.4 189.0M237.1 141.4L243.5 177.0M229.9 143.9L236.1 178.9M221.9 142.1L228.5 178.8M215.5 148.9L221.3 181.5M207.6 147.7L212.7 176.5M240.3 146.1L208.8 151.7M238.1 158.4L207.4 163.9M247.1 168.6L214.2 174.5M266.5 131.3L291.0 149.6M261.3 134.9L289.1 155.8M259.9 141.5L285.5 160.6M252.2 143.2L284.0 167.0M249.8 149.0L277.3 169.5M247.3 154.6L272.6 173.5M243.7 159.5L271.6 180.4M267.3 129.3L243.1 161.6M276.4 142.2L258.4 166.2M289.5 149.8L267.1 179.7M308.9 138.5L309.6 172.8M303.1 144.7L303.6 170.9M297.2 143.6L297.8 173.5M291.2 139.7L292.0 176.1M285.4 144.0L286.1 178.2M279.5 141.7L280.1 172.8M273.6 139.9L274.3 179.3M309.5 145.6L271.1 146.4M312.2 158.1L277.6 158.8M308.5 170.7L277.7 171.3M347.8 174.9L322.8 180.1M351.1 166.9L318.7 173.6M349.9 159.8L315.8 166.8M342.2 146.8L318.9 151.6M350.3 172.7L344.0 141.7M336.5 178.8L329.8 146.4M322.9 186.1L315.2 148.4M377.0 137.7L384.6 167.6M371.2 143.4L378.1 170.7M363.8 143.0L372.0 175.6M357.0 144.8L365.2 177.5M350.6 148.2L356.6 171.9M384.4 141.3L346.5 150.8M384.0 152.3L349.8 160.9M390.0 161.7L353.3 170.9M-17.2 166.8L4.2 187.5M-19.3 175.8L-0.6 193.9M-24.0 182.3L-6.5 199.2M-35.2 182.5L-12.7 204.2M-39.1 189.8L-16.3 211.9M-16.6 168.1L-37.7 189.9M-2.9 177.4L-24.5 199.7M10.2 187.3L-13.7 212.0M42.3 198.6L14.5 213.9M38.9 182.4L7.7 199.6M35.7 175.1L1.8 193.7M47.0 205.4L29.7 173.8M33.5 210.3L20.5 186.7M21.5 218.0L4.6 187.2M54.2 169.9L81.1 186.7M48.9 176.7L77.2 194.3M43.1 183.1L73.9 202.3M41.6 192.2L62.2 205.0M32.8 196.8L58.3 212.7M49.4 170.9L34.9 194.3M64.5 178.7L47.1 206.7M80.7 184.8L60.1 217.8M86.6 164.4L112.4 181.6M79.2 167.0L106.5 185.1M81.3 175.8L104.1 191.0M78.7 181.5L101.6 196.7M68.8 182.4L100.9 203.7M68.7 189.8L97.3 208.8M62.0 192.7L93.3 213.6M83.5 165.2L65.3 192.6M100.1 171.9L78.1 205.1M114.6 181.9L94.0 212.9M144.9 192.2L120.2 214.7M140.3 186.4L110.2 213.7M129.3 186.4L107.7 206.0M130.1 175.7L100.9 202.2M122.2 172.9L101.5 191.7M145.7 197.1L119.6 168.3M131.2 205.9L110.7 183.3M118.7 216.9L96.0 191.9M173.8 167.9L181.3 204.5M166.3 165.4L174.5 205.8M160.3 170.5L166.5 201.0M153.6 172.1L160.9 207.8M147.5 176.9L153.3 205.3M140.3 175.7L145.9 203.2M133.7 178.0L139.4 205.8M168.5 168.9L137.5 175.2M170.3 185.3L143.2 190.8M180.5 200.0L147.3 206.7M215.1 174.6L209.7 209.0M206.3 175.7L201.5 205.3M198.5 170.0L192.4 208.1M189.6 170.9L184.0 206.2M181.5 167.4L175.2 206.6M218.3 178.2L178.9 172.0M209.0 192.1L175.1 186.7M211.1 207.8L173.0 201.8M234.6 169.5L252.4 196.8M224.7 169.0L241.9 195.4M217.3 172.3L235.3 199.9M212.3 179.4L229.0 205.0M202.9 179.5L223.7 211.6M231.9 170.4L204.7 188.1M244.9 177.2L210.2 199.7M245.7 191.8L218.8 209.3M282.1 193.3L256.2 215.7M278.7 184.9L249.2 210.5M257.7 169.2L233.6 190.1M281.0 194.0L258.1 167.5M271.2 207.3L245.3 177.4M256.3 214.7L233.4 188.2M316.8 191.9L290.7 212.4M315.9 182.9L285.6 206.7M308.5 169.3L281.3 190.8M320.3 196.1L300.6 171.0M309.8 204.0L290.7 179.7M302.1 215.5L280.2 187.7M349.8 189.3L329.3 222.2M343.2 182.9L323.7 214.1M333.0 182.1L317.3 207.3M326.5 175.4L307.9 205.2M357.1 197.5L327.2 178.9M343.8 206.7L315.6 189.1M340.0 221.8L313.6 205.4M392.6 183.4L386.4 221.7M385.9 182.4L379.6 221.7M378.7 184.8L374.1 213.0M372.2 182.5L366.2 219.4M359.3 177.5L353.7 211.9M352.5 177.2L347.1 210.8M387.9 181.7L359.8 177.2M391.4 192.4L355.1 186.6M389.3 202.3L355.9 196.9M383.4 211.5L349.7 206.1M379.9 221.1L350.3 216.3M-1.1 202.0L14.6 228.0M-11.1 203.7L7.4 234.4M-17.4 211.4L-3.1 235.1M-27.4 213.1L-10.8 240.5M-36.8 215.7L-17.1 248.2M-5.6 200.5L-33.5 217.3M3.1 213.8L-24.5 230.5M13.7 226.0L-15.8 243.8M20.9 203.7L45.6 223.5M18.2 210.6L36.6 225.4M8.8 212.3L32.9 231.5M7.7 220.5L30.7 239.0M20.5 200.7L-2.1 228.9M35.0 208.4L9.9 239.7M44.0 223.1L23.0 249.2M83.0 228.5L58.8 248.0M77.6 225.7L55.4 243.6M71.5 216.4L41.7 240.3M63.4 215.8L40.4 234.2M63.0 208.9L39.0 228.2M60.9 203.5L30.9 227.5M76.3 232.6L57.8 209.6M66.7 238.9L48.8 216.7M60.0 248.9L39.0 222.8M88.9 202.5L115.9 216.8M88.3 210.1L120.4 227.0M82.8 215.0L111.9 230.4M79.1 221.0L109.3 236.9M76.9 227.7L110.2 245.3M72.4 233.2L107.0 251.5M95.4 206.8L76.3 242.9M104.0 213.9L86.6 246.8M111.4 223.3L97.5 249.7M145.9 207.7L153.9 237.6M137.7 200.6L146.6 233.6M133.4 207.8L141.0 236.3M115.2 209.9L123.1 239.4M110.2 214.5L118.4 245.2M142.0 207.3L112.4 215.2M144.3 220.2L115.6 227.9M147.3 232.9L119.2 240.4M154.5 204.8L179.1 231.3M145.5 212.3L171.4 240.2M137.1 220.4L162.1 247.4M135.4 227.2L158.4 252.0M132.0 232.2L150.6 252.2M157.9 211.3L132.3 235.1M166.9 220.9L140.1 245.8M174.5 231.8L151.6 253.0M186.7 214.9L214.2 216.2M180.7 221.9L214.0 223.5M183.1 229.3L219.3 231.0M183.6 209.4L181.9 245.6M200.3 211.9L198.8 242.9M216.9 215.1L215.5 245.2M243.5 238.2L215.8 251.2M243.4 231.8L218.4 243.6M244.6 224.9L214.7 239.0M242.1 219.7L210.8 234.5M235.7 209.9L204.2 224.9M228.7 206.9L203.4 218.8M246.2 237.9L231.7 207.2M230.8 241.8L218.8 216.4M216.2 247.6L202.9 219.5M278.5 232.7L245.8 244.9M273.1 227.0L247.8 236.5M274.5 218.8L247.0 229.1M270.9 212.5L243.7 222.7M275.4 233.3L264.0 202.8M265.1 238.8L253.3 207.2M253.4 240.5L242.0 210.0M316.1 229.9L294.1 251.3M309.4 224.9L286.3 247.4M305.4 217.1L284.3 237.7M301.0 209.8L277.7 232.5M291.7 207.2L272.0 226.4M316.6 231.4L292.9 207.1M307.2 241.9L281.8 215.9M297.4 252.1L274.7 228.7M341.5 207.4L352.1 236.6M330.8 204.0L342.5 236.0M325.5 215.2L334.2 239.1M317.2 218.5L327.0 245.3M306.1 213.9L318.6 248.3M340.9 210.8L306.8 223.2M349.1 219.6L313.4 232.6M352.2 230.3L316.2 243.4M388.1 221.3L385.1 254.0M382.5 216.2L379.4 249.7M376.3 217.6L373.1 251.8M364.5 212.8L361.4 246.2M358.0 217.0L354.8 251.2M352.1 214.7L349.2 246.1M389.8 218.4L357.2 215.4M389.1 235.7L351.5 232.1M385.1 252.6L351.8 249.5M14.2 263.7L-14.0 291.9M3.8 263.6L-18.2 285.5M0.7 256.2L-24.9 281.7M-3.1 249.5L-27.2 273.6M-7.5 243.4L-33.5 269.3M11.4 266.1L-8.5 246.1M3.6 281.7L-19.8 258.3M-12.3 289.2L-34.0 267.5M29.9 234.9L48.2 256.4M24.7 241.0L43.4 262.9M18.3 245.8L35.4 265.7M7.4 257.3L28.0 281.3M30.5 233.5L2.5 257.5M40.6 245.5L16.3 266.3M51.6 256.7L23.9 280.5M59.1 245.4L83.9 258.3M50.1 247.5L77.5 261.8M50.8 254.7L82.0 270.9M48.4 260.3L73.9 273.6M48.2 267.0L69.8 278.2M39.5 269.3L68.1 284.2M40.3 276.6L65.2 289.5M54.1 242.2L38.6 271.9M70.6 249.2L55.3 278.6M83.1 264.0L70.9 287.5M109.2 251.0L101.6 279.9M100.7 254.7L93.2 283.5M94.8 248.4L86.3 280.7M86.9 249.7L79.7 277.1M79.5 249.3L72.0 277.8M113.6 253.0L80.9 244.4M107.8 269.0L72.2 259.6M103.2 285.2L72.6 277.2M147.2 242.6L137.7 280.1M138.0 246.8L131.5 272.4M130.6 243.6L122.9 273.9M123.0 241.4L115.0 272.6M116.2 235.8L106.8 272.7M146.2 245.0L111.9 236.3M142.8 260.5L112.4 252.8M142.1 276.7L103.6 266.9M171.6 240.6L190.1 270.4M167.2 245.4L183.7 272.0M161.7 248.4L181.4 280.1M156.2 251.4L174.1 280.3M152.2 256.7L167.6 281.6M138.9 259.0L157.1 288.4M170.6 248.2L146.7 263.0M180.5 256.8L153.9 273.3M183.3 269.8L155.8 286.8M204.7 241.3L220.8 266.7M197.9 242.9L217.0 273.0M193.3 248.0L210.4 275.0M187.6 251.3L201.4 273.0M182.7 256.0L196.6 277.8M173.1 253.3L194.2 286.5M201.2 243.5L173.1 261.4M211.3 251.9L179.9 271.9M215.9 263.8L188.3 281.3M239.6 239.1L224.0 272.3M222.6 237.4L211.6 260.9M257.3 250.5L225.1 235.4M248.7 265.0L213.5 248.5M243.1 280.9L205.5 263.4M256.1 234.6L279.1 255.5M255.5 242.2L279.1 263.6M250.7 246.1L271.0 264.5M246.8 250.7L269.9 271.6M239.9 252.7L267.9 278.0M238.6 259.8L260.3 279.4M233.3 263.2L257.2 284.8M258.3 238.6L238.3 260.7M268.2 247.0L245.2 272.5M275.0 258.9L254.0 282.0M300.2 234.0L324.3 258.4M295.7 240.7L319.0 264.3M287.9 244.1L315.4 271.9M283.2 250.6L310.8 278.5M278.6 257.2L303.5 282.3M304.0 239.2L283.3 259.7M313.7 246.2L288.7 271.1M323.1 253.6L300.3 276.2M338.9 242.9L349.1 270.6M317.4 251.1L329.5 284.0M310.7 255.0L321.6 284.7M340.5 242.0L310.0 253.3M345.0 259.2L315.5 270.1M353.9 274.7L318.5 287.8M376.1 283.1L349.1 286.4M380.2 268.7L348.3 272.6M381.0 261.6L343.7 266.2M376.4 248.3L341.0 252.7M373.4 276.6L369.9 248.8M362.2 278.8L358.0 244.7M351.1 281.6L346.7 246.2M-11.2 272.7L13.1 290.6M-17.2 280.0L9.0 299.4M-24.9 286.0L1.6 305.7M-29.6 294.4L1.3 317.2M-30.4 305.5L-7.2 322.7M-10.3 280.6L-30.2 307.5M1.7 282.7L-21.7 314.2M11.3 288.1L-11.9 319.3M31.0 282.2L37.2 314.4M23.1 279.4L29.8 313.9M16.8 284.2L22.9 316.1M10.3 288.6L15.4 314.9M1.9 283.1L9.5 322.0M32.9 286.5L5.1 291.9M40.1 296.4L-0.8 304.2M37.4 308.1L3.2 314.7M71.8 312.3L44.6 315.8M69.8 303.7L43.9 307.1M71.2 294.8L39.2 298.9M67.9 286.4L35.0 290.6M70.4 313.3L65.6 275.4M58.8 316.3L54.3 281.7M46.9 317.4L42.3 281.7M88.1 273.1L117.1 285.3M88.2 283.0L116.2 294.8M81.7 299.9L110.6 312.1M72.5 305.9L106.7 320.3M91.1 273.9L77.2 306.9M103.1 280.9L90.4 310.9M115.2 287.5L102.7 317.1M143.9 316.6L109.2 320.4M146.2 307.9L106.9 312.2M138.8 300.3L113.7 303.1M144.9 291.2L105.4 295.5M138.1 283.5L104.1 287.3M144.2 320.6L140.2 284.7M128.2 319.9L124.3 284.5M112.4 320.1L108.7 286.2M173.1 278.5L177.1 311.2M165.6 283.3L169.6 316.4M157.0 278.6L160.9 310.9M149.8 285.8L153.5 316.0M141.1 280.5L145.8 319.1M178.2 285.3L143.3 289.5M172.2 297.8L146.8 300.9M180.5 308.7L146.2 312.8M220.5 281.8L211.0 310.1M213.6 282.6L204.0 311.0M207.6 280.5L198.5 307.4M203.4 273.1L193.0 304.1M188.7 276.9L180.1 302.7M184.9 268.5L172.9 304.0M220.0 284.8L185.9 273.4M215.7 298.4L179.4 286.3M208.8 311.2L174.5 299.6M214.0 282.6L240.5 284.3M207.2 305.2L243.2 307.6M215.0 275.7L213.1 305.1M227.8 278.4L225.7 311.6M241.1 273.7L238.6 312.7M253.1 280.2L283.3 286.2M251.5 288.5L282.1 294.5M250.7 296.9L278.8 302.4M244.5 304.2L281.7 311.6M248.5 313.6L278.3 319.5M256.0 281.1L250.1 311.0M270.0 280.7L262.9 316.6M283.7 282.1L276.6 317.7M293.4 263.9L316.6 290.9M291.3 275.4L311.8 299.2M283.4 280.0L305.5 305.9M277.1 286.7L297.0 309.8M267.9 289.9L291.5 317.4M292.1 268.2L267.9 288.9M305.5 278.8L278.8 301.6M313.5 294.0L288.1 315.8M352.9 292.7L348.5 323.8M346.5 291.3L342.9 317.2M334.1 286.6L329.2 321.4M327.7 285.5L322.6 321.4M322.0 279.4L317.4 312.1M315.2 280.8L310.6 313.8M350.7 292.5L320.1 288.2M345.5 303.5L315.5 299.3M350.7 316.0L309.9 310.2M377.3 279.3L385.6 310.0M368.5 278.5L378.0 313.7M359.8 278.1L368.1 309.1M351.8 280.3L362.3 319.4M376.8 279.9L344.7 288.5M378.9 293.2L346.3 302.0M388.2 304.6L348.5 315.3M8.0 340.1L-25.5 344.6M-1.2 335.4L-27.2 339.0M5.7 328.6L-25.9 332.9M4.1 323.0L-28.5 327.4M2.8 311.4L-30.9 315.9M-0.8 306.0L-34.9 310.6M-0.2 337.2L-4.6 305.0M-12.1 346.1L-17.1 309.2M-25.8 341.7L-30.3 308.4M45.7 336.9L17.1 341.5M41.2 330.2L16.4 334.1M41.8 322.5L9.3 327.8M41.4 315.1L10.0 320.1M41.7 307.5L6.6 313.1M47.8 336.4L42.6 304.1M30.7 339.6L25.0 304.2M13.8 343.9L8.8 312.5M74.9 317.4L79.7 345.1M67.9 318.3L72.4 344.2M53.5 318.3L58.5 347.7M72.7 313.1L45.2 317.8M80.2 330.0L42.6 336.5M81.7 348.0L46.1 354.1M78.3 312.7L106.7 316.8M77.6 319.0L106.3 323.1M80.9 325.8L107.3 329.6M80.3 332.0L105.0 335.6M77.4 337.9L106.9 342.2M70.2 343.2L104.7 348.2M78.9 316.0L74.4 347.3M94.2 320.8L90.5 346.5M110.0 321.8L105.0 356.1M128.9 316.6L144.5 348.6M121.8 321.8L134.0 346.7M113.3 324.0L128.6 355.4M105.6 328.1L117.7 352.7M137.4 317.8L109.9 331.2M145.6 325.8L111.5 342.4M145.1 338.0L114.9 352.8M171.3 314.3L169.7 342.6M163.7 308.4L161.9 339.7M155.7 309.2L153.9 342.2M147.8 308.9L145.9 342.9M139.9 308.1L138.0 343.0M171.6 315.7L138.8 313.9M172.5 327.0L138.5 325.0M174.5 338.2L135.7 336.1M209.7 305.7L215.3 340.5M201.6 310.1L207.8 348.3M193.8 316.0L198.7 346.4M184.5 312.9L189.4 343.5M175.4 311.1L180.8 344.1M211.4 311.7L174.1 317.8M215.4 325.9L183.1 331.1M211.6 341.3L182.4 346.0M241.5 313.2L246.9 351.6M227.6 319.9L232.1 352.1M212.6 319.3L216.6 347.5M242.2 321.3L211.7 325.6M242.2 332.1L213.9 336.1M251.6 341.6L210.3 347.4M271.2 312.7L280.7 339.4M264.5 310.7L276.3 343.8M258.9 311.8L269.3 341.0M253.0 311.9L267.1 351.4M249.9 320.0L260.2 348.9M244.0 320.2L254.7 350.1M238.0 320.1L248.2 348.7M268.9 310.8L236.3 322.4M272.4 327.3L244.9 337.2M280.7 342.2L245.9 354.6M321.1 343.2L288.9 350.0M320.5 336.7L290.8 342.9M319.9 330.1L289.6 336.5M317.0 317.4L282.1 324.8M322.3 350.7L315.2 316.8M304.6 347.5L298.6 318.8M289.4 355.9L282.8 324.7M353.5 341.9L323.8 350.1M351.5 335.4L325.1 342.7M350.4 321.5L319.2 330.2M342.3 309.7L314.9 317.3M343.4 302.3L310.1 311.6M350.5 337.5L341.0 303.3M337.2 342.7L327.6 308.5M323.6 347.2L314.2 313.4M351.8 324.1L377.2 332.9M342.1 328.6L373.1 339.4M345.2 337.6L373.4 347.5M338.1 343.0L370.8 354.5M354.3 314.5L344.1 343.6M367.3 317.2L356.4 348.4M379.5 322.3L368.9 352.5M1.3 352.0L-5.7 389.7M-5.7 354.5L-11.9 387.6M-11.5 350.2L-17.5 382.0M-18.1 349.7L-24.2 382.6M-24.5 348.8L-30.2 379.2M7.0 361.0L-33.0 353.5M-2.2 371.2L-28.1 366.4M3.0 384.1L-37.7 376.5M21.2 341.9L45.7 356.9M16.6 348.7L44.2 365.6M14.0 356.7L44.5 375.5M12.1 365.3L40.1 382.4M3.4 369.5L36.2 389.6M22.1 339.8L5.6 366.7M37.8 347.0L17.7 379.8M51.9 356.7L32.7 388.0M60.7 338.4L89.2 358.6M52.5 343.9L80.6 363.8M50.6 353.9L74.8 371.1M48.8 364.0L70.5 379.4M60.6 337.1L41.1 364.7M75.8 346.6L55.3 375.6M87.5 361.0L67.1 389.7M104.7 344.2L114.3 368.7M97.1 347.0L108.9 377.2M88.9 348.2L99.2 374.6M80.8 349.7L92.8 380.7M73.4 353.1L85.7 384.7M104.1 345.9L78.1 356.0M109.2 355.8L74.7 369.2M117.5 364.4L83.2 377.7M148.1 372.0L119.8 387.1M145.5 359.1L113.7 376.1M142.5 353.5L108.3 371.9M134.2 350.9L103.3 367.5M132.6 344.6L102.6 360.7M144.6 376.2L126.6 342.5M132.6 378.9L115.9 347.7M121.3 382.9L105.0 352.7M154.8 345.1L181.5 354.7M151.9 351.5L179.1 361.4M147.7 357.6L172.5 366.5M142.6 363.3L171.9 373.9M145.1 371.7L171.0 381.1M156.5 341.1L143.4 377.1M167.7 345.4L154.3 382.3M179.2 348.8L168.2 379.1M224.0 362.3L199.1 387.1M217.7 360.5L196.3 381.8M217.8 352.2L189.3 380.6M202.3 343.4L182.3 363.2M201.1 336.4L177.9 359.5M226.1 360.8L201.7 336.2M219.2 368.1L195.8 344.5M211.6 374.6L187.0 349.9M205.4 382.6L181.9 359.0M199.1 390.4L172.3 363.5M213.0 346.7L245.1 351.0M209.8 352.0L243.3 356.4M214.7 358.3L241.8 361.9M206.9 363.0L244.3 368.0M210.0 369.1L243.3 373.5M203.5 379.6L237.7 384.2M213.3 346.9L209.2 377.9M228.0 347.7L223.7 380.1M242.1 353.0L238.0 383.9M251.5 340.3L279.4 348.1M252.1 348.1L283.4 356.9M246.7 354.3L277.4 362.9M245.8 361.7L275.3 370.0M243.2 368.7L276.0 377.9M251.5 335.2L241.1 372.5M265.3 344.3L256.6 375.4M281.8 343.5L272.6 376.4M319.9 361.8L305.0 385.5M314.6 354.4L295.5 384.9M298.2 348.9L284.7 370.3M295.0 338.2L273.6 372.2M322.8 358.5L296.0 341.8M313.7 373.3L280.9 352.7M303.4 387.3L275.7 369.9M331.1 334.4L349.7 358.8M326.9 338.9L344.7 362.0M322.6 343.2L343.8 370.8M319.2 348.6L337.5 372.5M313.7 351.4L329.5 371.9M309.2 355.4L329.9 382.3M303.6 357.9L322.4 382.5M334.4 336.1L306.3 357.7M343.6 346.2L314.6 368.4M349.1 359.1L320.5 381.1M373.6 340.8L379.3 372.8M368.0 342.7L373.1 371.6M361.8 341.4L367.1 371.1M356.3 343.5L362.2 376.8M350.0 341.7L355.9 374.2M345.3 348.5L350.0 374.8M338.7 344.4L344.2 375.5M373.8 342.0L340.5 348.0M375.7 355.9L342.6 361.8M377.1 369.8L342.0 376.1M6.4 389.1L-5.7 416.4M1.8 385.6L-12.6 418.2M-2.6 381.4L-17.6 415.6M-7.1 377.8L-20.9 409.0M-12.9 376.9L-25.6 405.8M-21.9 369.4L-37.7 405.3M4.2 385.1L-26.5 371.5M0.2 401.0L-31.5 387.0M-5.2 416.3L-37.9 401.9M49.7 396.7L25.2 420.5M43.7 390.5L22.7 411.0M41.7 380.4L18.0 403.5M30.8 379.1L12.8 396.6M29.9 367.8L0.7 396.3M46.8 393.3L23.7 369.6M37.8 405.2L14.3 381.0M26.9 415.2L6.5 394.2M70.0 376.9L68.3 410.4M62.6 379.1L60.9 410.6M55.0 383.4L53.7 408.6M69.0 380.4L36.3 378.7M71.8 396.3L38.9 394.6M72.7 412.1L38.8 410.3M85.7 379.2L109.2 395.6M77.4 382.6L110.1 405.5M78.1 392.3L100.7 408.1M72.5 397.5L97.3 414.9M64.1 400.8L94.2 421.9M89.5 376.9L68.8 406.4M97.2 389.5L81.0 412.6M110.9 393.5L88.7 425.3M148.7 407.1L119.3 418.0M146.2 400.2L122.7 408.9M142.9 393.6L118.2 402.7M144.3 385.2L116.1 395.6M144.8 377.1L107.1 391.1M151.9 411.2L140.1 379.4M136.8 411.4L127.3 385.6M124.5 419.0L111.3 383.1M183.5 395.7L166.6 428.3M179.6 390.8L161.5 425.8M172.2 392.7L158.8 418.7M169.2 386.1L153.1 417.3M161.6 388.5L148.9 413.1M157.2 384.7L143.4 411.4M154.2 378.2L137.0 411.3M181.1 397.9L148.4 381.0M172.0 409.3L143.0 394.3M166.8 422.7L140.4 409.0M216.6 405.6L181.5 414.1M217.9 393.9L180.3 403.0M215.1 388.8L177.8 397.9M212.3 383.8L178.4 392.0M206.4 379.5L175.1 387.1M211.1 372.7L180.0 380.2M214.9 405.0L206.4 369.8M199.2 406.0L193.2 381.1M185.0 413.1L177.2 380.7M248.6 378.8L251.2 408.4M242.6 381.3L245.6 415.9M236.3 379.7L239.1 412.3M230.6 385.6L232.8 410.8M224.0 381.8L226.8 413.1M218.3 387.5L220.7 414.6M212.0 385.9L214.2 411.6M243.7 382.2L209.7 385.1M247.7 396.8L210.9 400.0M247.2 411.8L213.9 414.7M248.9 385.0L274.5 387.5M246.6 392.0L281.0 395.3M242.8 398.9L275.9 402.0M243.0 406.1L278.6 409.5M241.9 413.2L270.0 415.8M248.5 381.9L245.4 414.3M261.4 383.2L258.0 418.7M274.5 382.7L270.8 421.8M295.9 382.4L312.7 401.2M286.7 383.5L311.3 411.2M279.3 386.8L306.4 417.3M273.5 391.9L294.8 415.8M269.6 399.1L292.5 424.8M297.5 377.1L272.7 399.2M304.4 391.3L282.8 410.5M317.4 400.1L287.0 427.1M321.8 384.8L352.0 390.3M317.0 391.9L347.7 397.4M313.3 399.1L352.6 406.2M314.2 407.2L342.7 412.4M314.7 415.3L349.2 421.5M321.8 381.7L315.9 414.3M334.6 390.0L329.9 416.0M349.6 385.9L343.7 418.6M362.7 369.2L385.3 394.9M358.6 377.8L377.2 399.0M350.0 381.4L372.0 406.4M340.8 384.2L366.0 412.8M335.9 391.8L357.9 416.9M362.6 376.5L337.9 398.2M375.7 379.4L345.7 405.7M379.8 390.1L355.1 411.8" fill="none" stroke="#fff" stroke-width="1.25" opacity=".8"/><path d="M119.2 60.3Q116.3 65.2 114.0 70.4M134.6 23.2Q135.0 28.5 134.3 33.9M25.7 36.3Q31.6 47.7 31.6 60.5M82.2 251.0Q72.2 253.5 62.0 254.3M359.3 18.6Q353.6 24.5 345.5 25.2M43.3 123.4Q37.4 126.5 32.2 130.6M235.1 149.0Q237.8 155.0 233.5 160.0M75.8 272.2Q76.9 279.9 79.3 287.4M166.8 119.9Q159.0 128.3 148.7 133.5M211.4 210.1Q201.3 216.1 190.0 218.9M360.7 47.2Q366.4 57.9 366.7 70.1M179.9 15.7Q173.4 25.6 168.0 36.2M322.2 125.5Q315.7 133.6 310.3 142.4M167.9 336.0Q158.5 336.3 149.6 339.2M22.3 280.6Q13.8 291.9 9.9 305.5M104.7 154.3Q102.4 159.0 99.5 163.3M61.8 46.8Q74.1 46.1 85.3 51.2M91.1 156.4Q86.0 159.0 80.6 160.9M202.2 353.4Q192.4 361.7 180.7 367.1M152.8 143.5Q141.1 151.0 127.4 153.2M64.8 92.8Q71.3 99.6 78.8 105.3M96.7 1.6Q98.3 9.8 100.9 17.7M350.7 276.2Q348.8 286.7 349.7 297.3M19.9 359.8Q8.4 366.2 0.0 376.2M144.4 159.6Q155.7 159.7 164.7 166.4M24.8 83.5Q33.6 84.3 38.9 91.4M0.1 60.5Q9.1 59.5 15.8 65.7M321.8 245.6Q328.8 247.8 334.7 252.2M134.0 49.1Q121.7 55.7 109.2 61.9M178.1 34.4Q186.3 35.1 193.4 39.5M305.0 64.6Q318.5 65.8 332.1 66.5M53.9 217.3Q63.3 221.9 73.4 218.9M317.7 278.5Q325.3 282.7 329.0 290.6M284.1 213.0Q279.4 219.8 271.8 223.2M298.6 394.0Q286.5 397.2 276.7 404.9M272.3 90.7Q275.6 99.1 271.4 107.1M10.3 111.8Q15.3 122.4 25.7 128.1M164.6 374.8Q151.0 376.4 137.4 375.8M81.1 90.7Q86.1 95.5 92.3 98.7M331.3 336.2Q329.6 347.2 332.7 357.9M31.2 264.2Q19.1 265.7 8.1 271.0M175.9 71.4Q168.1 74.4 163.3 81.2M357.6 158.3Q360.0 171.8 365.8 184.1M62.6 50.8Q73.1 59.0 85.9 62.8M53.8 330.6Q43.0 332.5 32.0 332.0M201.9 52.4Q215.6 54.2 229.4 53.6M193.8 373.4Q193.9 386.6 199.1 398.6M77.7 100.7Q81.5 106.9 86.3 112.1M95.4 167.6Q108.0 171.8 119.6 178.2M168.6 233.3Q159.2 232.7 151.8 238.5M184.6 212.7Q184.7 217.9 183.8 223.0M67.4 1.6Q62.2 5.6 56.8 9.3M266.9 222.6Q271.5 231.1 276.9 239.1M288.6 42.4Q289.0 49.9 285.9 56.7M284.2 203.1Q278.7 214.1 279.6 226.3M163.1 245.0Q161.4 254.6 162.8 264.2M166.5 213.3Q165.8 226.9 168.3 240.2M322.6 376.9Q326.9 386.6 336.3 391.5M309.1 54.9Q318.7 55.0 325.8 61.5M88.6 29.2Q79.7 38.0 76.3 50.0M56.8 286.4Q51.1 290.5 50.8 297.5M356.1 87.8Q347.6 89.2 339.1 90.4M364.3 333.0Q372.0 337.4 379.8 341.6M124.8 78.3Q134.2 85.9 137.2 97.7M203.9 176.2Q211.8 177.6 219.8 177.1M188.5 25.7Q176.3 22.5 164.3 26.8M38.6 106.2Q50.7 105.9 62.4 109.2M47.7 168.9Q36.3 174.2 23.9 175.7M55.0 367.7Q55.7 379.4 50.0 389.7M21.2 275.3Q19.1 281.6 23.8 286.3M233.5 320.7Q246.6 320.6 258.0 327.3M317.5 181.5Q319.3 191.9 327.2 199.0M98.6 51.7Q101.1 59.1 97.4 65.9M59.4 20.2Q66.6 23.5 72.0 29.4M279.5 116.0Q280.7 122.6 279.5 129.2M6.7 100.2Q18.2 101.1 29.9 101.3M69.7 189.9Q63.4 188.6 58.1 192.3M159.0 198.0Q151.6 202.2 144.2 206.5M253.1 393.0Q257.6 404.8 264.9 415.0M234.0 161.9Q239.2 165.4 239.1 171.6M26.0 296.4Q32.9 298.7 35.0 305.7M309.6 348.2Q307.5 355.7 301.9 361.2M107.8 183.8Q116.7 186.4 123.7 192.3M353.9 389.0Q349.2 395.6 351.8 403.3M113.9 142.6Q122.3 142.5 130.8 142.7M185.0 80.4Q186.8 85.5 184.9 90.5M33.0 159.8Q38.4 158.9 43.3 161.2M85.7 234.2Q83.3 245.8 83.5 257.6M263.5 351.6Q262.5 360.4 268.9 366.6M55.0 289.7Q50.2 293.4 50.3 299.4M328.2 250.9Q322.1 262.0 311.7 269.2M192.7 201.7Q180.8 205.5 171.5 213.9M214.9 357.1Q210.6 367.7 202.7 376.0M11.5 53.2Q11.6 59.8 16.5 64.0M205.5 251.1Q201.3 261.4 196.9 271.6M1.2 319.1Q-5.7 325.7 -12.2 332.6M242.6 26.4Q240.2 34.1 232.8 37.1M97.7 291.7Q104.8 301.8 116.4 305.7M181.8 153.0Q180.4 164.3 183.2 175.3M227.0 257.1Q233.7 256.7 239.3 260.2M273.5 121.8Q275.9 127.5 271.3 131.8M98.9 268.8Q94.0 278.9 86.3 287.0M190.1 185.9Q187.6 192.2 191.4 197.9M73.3 391.3Q68.3 392.6 63.2 393.3M301.7 387.2Q305.2 394.2 304.1 401.9M348.0 84.3Q346.2 90.3 344.8 96.4M350.6 53.0Q340.9 55.6 334.4 63.3M258.8 92.6Q251.1 99.1 241.0 98.5M1.3 196.7Q5.4 203.9 3.7 211.9M126.6 126.4Q121.2 127.1 117.8 131.3M308.8 48.0Q296.9 47.5 286.6 53.2M106.7 148.9Q110.6 162.3 115.9 175.3M132.7 171.2Q138.7 173.3 139.8 179.5M307.2 114.2Q300.4 117.5 293.0 117.2M188.0 75.9Q190.5 89.7 198.6 101.0M298.8 252.4Q285.7 255.6 272.9 259.6M264.8 19.8Q257.3 25.2 252.7 33.3M237.2 114.5Q250.8 113.6 263.5 118.6M173.8 137.5Q177.6 149.1 187.6 156.2M95.7 262.4Q102.3 270.0 107.5 278.6M61.6 64.7Q72.0 72.6 82.5 80.6M81.0 362.5Q72.0 365.5 62.9 362.7M70.8 36.3Q75.4 40.4 76.4 46.5M95.1 227.8Q84.3 232.6 73.0 236.0M152.3 209.7Q158.6 215.8 158.4 224.6M102.1 387.1Q110.5 391.7 119.7 394.4M317.5 86.4Q322.9 91.3 327.1 97.3M164.1 381.6Q154.4 390.9 141.2 393.3M11.9 283.8Q2.9 286.1 -5.7 289.8M0.1 156.6Q-12.7 156.7 -24.1 162.3M357.8 99.4Q363.7 101.7 369.8 103.7M251.0 376.6Q242.4 383.5 237.1 393.2M168.3 220.6Q180.5 220.0 192.2 223.6M338.5 258.2Q343.7 262.1 345.6 268.2M234.2 279.4Q239.4 281.6 244.7 283.3M214.5 155.2Q225.0 159.0 230.4 168.7M111.0 184.3Q99.9 182.6 89.5 187.1M174.9 93.9Q183.5 104.6 194.4 113.0M113.1 8.7Q113.8 19.8 113.2 30.9M94.7 266.9Q88.7 272.2 81.0 270.2M124.4 168.2Q118.7 172.6 117.0 179.6M272.0 202.0Q283.9 209.0 293.9 218.5M301.8 92.3Q311.9 98.7 319.9 107.5M350.3 198.3Q356.5 201.6 362.0 206.1M244.8 379.5Q253.5 381.2 260.1 387.1M358.5 56.8Q364.1 56.8 369.4 58.6M330.5 353.4Q318.6 361.5 311.9 374.2M121.2 74.2Q110.4 80.2 98.2 78.9M244.5 151.4Q250.0 157.8 250.7 166.2M1.1 111.9Q9.9 122.7 13.3 136.2M354.9 83.0Q357.9 95.2 365.6 105.3M159.1 19.7Q156.5 28.3 160.5 36.4M71.0 145.7Q66.3 148.1 61.0 149.1M298.8 306.7Q304.5 303.9 309.3 308.0M338.6 102.8Q330.3 113.0 320.2 121.5M100.2 383.1Q96.0 389.3 94.9 396.8M116.5 110.3Q128.2 113.7 140.1 110.5M233.3 377.3Q240.4 377.6 247.5 378.4M352.1 381.6Q355.2 388.2 357.2 395.2M181.6 371.2Q190.8 379.5 202.1 384.5M302.8 309.1Q301.5 317.1 297.5 324.1M133.2 312.9Q139.2 316.5 146.3 316.2M91.0 25.9Q101.1 25.6 110.8 28.0M360.7 353.4Q353.5 357.0 346.0 354.0M35.5 199.4Q31.6 207.8 24.4 213.7M153.4 248.1Q144.9 256.7 141.2 268.2M244.5 48.5Q237.5 51.7 231.1 55.8M137.3 295.2Q144.3 297.8 149.0 303.7M56.4 353.7Q55.3 361.6 52.6 369.1M365.2 202.9Q373.6 212.0 383.6 219.2M364.7 40.9Q362.9 53.5 366.6 65.6M336.5 16.1Q342.1 19.5 343.8 25.8M358.1 233.3Q349.3 232.2 341.8 236.9M165.3 104.0Q157.0 115.1 144.6 121.3M219.4 248.0Q227.6 251.0 232.3 258.5M75.1 102.0Q74.0 113.0 68.4 122.6M4.2 130.9Q1.9 137.3 -2.9 142.2M74.9 318.1Q77.2 324.1 73.2 329.1M145.5 220.1Q145.4 226.5 140.5 230.6M255.9 163.9Q258.0 172.2 265.7 176.0M114.9 226.6Q116.1 235.8 122.5 242.4M366.8 145.5Q377.5 150.3 385.6 158.9M2.2 360.7Q5.8 372.5 8.0 384.7M324.9 184.4Q329.2 187.2 333.8 189.4M235.8 363.9Q246.2 365.9 256.1 369.8M185.6 58.4Q189.1 68.0 197.8 73.4M40.0 196.2Q30.2 206.1 17.6 212.0M46.6 377.2Q37.6 381.5 28.0 378.7M340.8 155.2Q330.0 155.8 320.6 161.4M59.0 314.3Q63.8 322.0 72.2 325.4M305.1 73.2Q311.7 78.7 318.5 84.1M141.2 49.2Q147.2 59.6 157.6 65.4M15.1 224.9Q9.4 226.7 7.4 232.3M43.3 239.8Q43.2 250.6 40.0 260.8M154.6 233.0Q157.5 243.6 159.6 254.3M161.3 9.4Q159.9 18.9 154.4 26.9M281.0 312.0Q282.1 318.5 282.7 325.1M39.4 51.4Q41.1 57.0 41.9 62.8M187.7 16.3Q183.7 20.8 183.0 26.7M286.2 204.6Q295.7 205.2 305.0 207.8M349.9 54.5Q336.5 58.9 324.8 66.6M299.9 77.5Q290.3 74.4 281.1 78.6M337.1 66.0Q328.7 77.0 316.0 82.5M129.1 302.5Q141.5 307.1 152.1 315.0M300.2 57.4Q302.4 70.7 300.0 84.0M96.7 202.4Q101.7 205.5 102.5 211.4M59.3 374.6Q54.6 387.0 45.4 396.6M288.8 46.0Q288.9 56.8 286.8 67.4M321.2 222.1Q321.1 235.4 314.8 247.1M365.4 251.9Q371.2 262.8 373.4 274.9M364.5 230.9Q370.0 241.5 374.6 252.5M65.0 297.4Q77.6 297.4 89.5 301.2M235.2 393.6Q233.8 404.6 229.4 414.8M0.7 13.5Q10.3 17.8 19.5 23.1M188.7 358.2Q194.6 362.2 201.6 363.9M8.2 1.0Q11.9 5.9 13.4 11.7M82.5 233.4Q79.7 239.7 78.7 246.6M174.8 53.9Q168.3 58.1 160.7 56.7M35.3 255.3Q24.5 260.7 13.1 264.8M97.2 4.6Q93.9 14.2 88.4 22.7M237.6 177.5Q226.6 181.8 214.8 182.1M332.5 17.6Q333.7 26.4 330.8 34.8M21.5 311.5Q31.3 315.5 41.4 312.3M52.4 79.8Q48.1 88.4 46.0 97.8M299.3 69.9Q306.6 74.2 308.0 82.6M327.3 313.2Q322.0 315.4 320.9 321.1M274.2 186.1Q269.6 194.2 261.7 199.3M38.7 92.9Q46.5 95.9 54.7 94.9M255.8 338.1Q250.9 343.7 246.7 349.8M160.5 315.4Q158.8 322.7 159.4 330.1M355.2 86.8Q351.1 90.5 345.6 90.6M86.9 297.6Q75.6 300.9 63.8 301.6M323.9 131.4Q332.8 141.2 343.1 149.4M255.0 266.1Q245.6 264.0 236.6 267.3M256.7 343.0Q258.4 354.4 261.2 365.6M113.3 84.8Q108.1 88.8 109.0 95.4M53.2 10.8Q66.2 14.0 78.4 19.5M52.2 11.5Q63.2 14.0 74.5 14.4M256.5 294.7Q266.8 295.8 276.7 298.9M300.9 327.8Q294.6 326.9 290.3 331.6M336.5 377.7Q344.0 377.1 349.4 382.3M12.7 339.1Q2.3 342.9 -5.1 351.0M232.4 114.9Q237.4 118.7 243.6 118.6M75.4 127.7Q78.6 132.2 77.9 137.7M104.0 286.3Q103.8 295.0 110.3 300.7M185.4 340.6Q184.1 345.7 181.5 350.4M160.6 309.2Q165.6 319.4 171.1 329.3M79.7 344.9Q92.3 345.9 103.5 351.9M0.5 80.8Q-7.0 93.1 -19.8 99.6M180.6 196.6Q175.3 200.6 169.9 204.5M127.8 332.7Q138.2 341.4 146.2 352.4M79.0 279.8Q78.0 285.8 79.1 291.8M29.8 315.2Q21.9 324.4 15.7 334.8M130.9 160.5Q138.2 171.7 139.3 185.1M326.9 10.1Q330.9 17.1 338.7 19.0M184.4 151.7Q177.9 154.5 171.2 156.8M195.6 301.8Q188.7 310.2 180.2 316.9M120.2 62.1Q109.6 65.6 100.9 72.5M62.4 175.5Q56.6 184.5 46.9 188.9M170.0 354.1Q176.0 357.5 179.9 363.2" fill="none" stroke="#fff" stroke-width="1.2" opacity=".95"/><path d="M60.7 275.9Q59.8 283.5 54.7 289.2M291.7 323.1Q293.5 330.8 291.1 338.2M1.2 148.4Q-2.1 151.3 -0.7 155.4M85.5 93.1Q97.1 96.6 109.2 96.3M322.0 246.4Q327.9 247.0 333.9 247.6M42.6 380.8Q42.1 385.8 46.1 388.8M46.0 371.2Q48.4 378.9 48.3 386.9M178.4 74.8Q189.3 73.9 199.8 77.3M287.1 83.4Q275.9 82.5 265.2 85.6M280.7 232.3Q278.1 235.5 275.3 238.5M304.3 80.4Q293.8 83.8 283.0 85.7M134.4 180.5Q139.4 191.4 142.8 202.9M9.9 37.3Q2.3 46.6 -5.2 55.8M180.9 220.2Q176.8 223.1 173.9 227.3M204.8 249.0Q209.3 250.5 212.4 253.9M341.2 138.6Q342.5 145.1 337.7 149.6M24.2 325.5Q18.3 328.5 14.4 333.7M248.7 359.5Q241.6 356.5 235.5 361.2M353.8 236.2Q347.2 239.8 340.0 241.5M91.0 350.5Q92.9 354.4 97.3 354.0M284.8 193.3Q282.7 196.7 278.8 196.7M106.7 167.8Q110.5 168.6 112.9 171.5M330.9 393.4Q327.2 400.0 320.7 403.9M352.9 210.3Q352.5 214.2 348.6 215.2M308.5 318.1Q300.9 321.7 292.8 324.2M213.9 339.7Q219.8 345.2 222.7 352.6M282.7 4.1Q279.5 15.9 270.0 23.4M218.5 257.5Q212.0 263.0 203.7 265.0M149.3 383.5Q146.2 387.8 141.2 385.9M34.6 10.1Q32.4 14.8 36.0 18.5M241.2 50.6Q240.5 56.5 239.7 62.4M80.8 66.4Q85.3 71.3 91.5 73.4M202.4 18.5Q194.0 25.7 189.0 35.6M291.0 3.1Q289.3 6.9 291.8 10.2M64.5 284.6Q72.1 290.2 77.5 297.8M15.4 155.5Q23.0 163.8 27.9 173.9M185.1 219.7Q181.2 219.6 177.5 221.0M187.0 293.8Q181.1 292.8 175.5 295.0M193.5 224.3Q202.9 230.1 213.7 228.4M130.7 127.2Q126.8 130.7 122.8 127.4M27.0 325.7Q21.2 329.8 16.7 335.4M7.3 257.9Q9.5 265.2 10.0 272.9M147.8 90.2Q154.9 89.2 161.4 92.3M259.1 326.9Q256.2 333.7 250.0 337.8M141.8 194.7Q140.2 206.7 132.4 216.1M176.5 196.8Q167.9 203.9 162.6 213.9M230.7 303.4Q223.9 311.9 219.9 321.9M251.3 98.1Q244.8 98.9 238.8 101.5M303.5 385.5Q300.5 387.1 297.4 385.7M114.7 156.5Q123.4 157.0 129.0 163.5M111.4 377.4Q108.7 384.8 101.5 387.8M351.8 281.6Q355.9 286.1 361.4 288.8M250.8 104.3Q245.3 107.2 239.2 106.1M311.1 61.4Q307.9 65.0 305.9 69.4M102.1 151.6Q95.1 153.4 87.9 154.3M227.1 112.3Q233.6 114.1 238.1 119.0M69.4 384.3Q79.2 388.9 89.8 386.5M259.3 7.6Q258.4 10.9 259.3 14.3M257.8 96.1Q265.7 93.0 273.5 96.5M113.7 181.6Q108.7 186.5 101.7 185.8M291.4 328.9Q293.5 332.6 290.7 335.8M148.3 220.8Q154.3 229.5 163.8 234.0M340.5 353.4Q348.9 350.5 356.9 354.3M331.1 298.8Q330.1 304.6 324.3 305.2M300.0 242.6Q295.1 248.5 294.7 256.1M124.4 107.9Q126.0 113.4 129.4 118.1M327.6 28.4Q334.7 31.4 342.4 31.6M69.8 107.9Q73.1 108.5 76.4 109.2M250.5 261.3Q252.3 266.2 257.4 265.0M198.2 163.4Q192.6 171.1 187.4 179.1M28.8 330.9Q32.2 332.1 34.1 335.1M196.0 251.3Q204.0 256.1 212.0 261.1M59.6 340.4Q49.6 345.6 41.3 353.1M80.0 311.1Q71.6 310.3 65.1 315.8M357.0 156.1Q345.4 155.8 334.5 160.2M4.1 140.8Q-0.7 148.0 -1.8 156.6M238.0 64.6Q229.7 63.3 222.8 68.0M76.1 399.2Q72.5 408.7 72.7 418.9M324.9 144.9Q332.0 144.2 337.7 148.4M198.7 326.0Q203.9 328.2 202.2 333.6M155.6 232.2Q164.8 230.6 173.6 233.7M39.4 371.1Q38.5 382.1 37.8 393.1M45.2 96.0Q45.2 105.1 49.3 113.1M276.5 260.3Q282.0 264.5 286.1 270.1M180.2 106.2Q183.0 113.7 178.5 120.4M302.8 234.6Q293.9 238.7 287.1 245.8M365.6 150.7Q365.3 154.0 367.6 156.5M214.0 230.6Q209.2 232.8 204.4 230.6M270.2 325.0Q271.4 328.4 270.5 331.9M304.1 199.9Q303.9 206.5 305.7 212.8M220.2 277.2Q211.8 282.1 202.4 285.2M92.1 312.8Q84.6 321.5 74.1 326.5M312.0 356.2Q317.3 358.7 323.2 359.0M53.8 332.5Q61.2 338.1 66.1 346.0M80.3 82.8Q82.6 92.2 80.4 101.6M252.6 134.0Q251.9 140.8 246.9 145.3M51.9 23.1Q50.5 30.3 44.1 34.1M324.0 261.9Q333.5 263.3 343.0 263.2M163.3 200.3Q156.9 199.9 150.7 201.8M233.9 146.3Q237.5 155.5 243.0 163.6M168.1 205.5Q178.3 209.1 183.6 218.6M236.7 182.0Q242.6 187.8 249.4 192.6M31.9 196.0Q41.5 199.9 49.6 206.1M120.8 86.2Q125.9 84.1 130.1 87.6M229.7 338.9Q232.6 341.7 235.9 344.1M42.5 162.1Q37.9 164.2 35.5 168.7M198.2 34.0Q206.5 37.5 210.4 45.6M75.0 230.7Q67.8 233.7 62.0 239.0M3.3 121.0Q10.4 129.9 15.5 139.9M288.8 13.7Q286.7 24.8 288.9 35.8" fill="none" stroke="#b9a3c4" stroke-width=".8" stroke-dasharray="1.5 1.5" opacity=".8"/><path d="M209.9 252.9Q202.1 256.5 195.6 262.1M327.8 363.5Q337.2 370.9 347.6 376.7M185.2 386.5Q180.8 396.1 183.5 406.4M233.9 120.5Q242.8 127.1 245.7 137.8M223.6 294.3Q223.4 308.4 229.9 320.9M204.5 272.5Q209.1 278.5 216.6 277.2M104.7 85.3Q93.6 92.3 80.5 93.5M118.4 97.1Q122.2 101.8 126.3 106.2M112.0 157.7Q119.9 158.4 123.7 165.4M321.2 298.9Q322.6 306.5 318.5 312.9M44.0 126.6Q52.8 125.8 60.7 129.7M71.0 261.5Q73.4 271.5 73.7 281.8M198.4 314.1Q202.2 319.4 205.9 325.0M139.5 312.2Q153.9 313.3 165.6 321.7M199.5 177.4Q205.9 190.0 214.9 200.9M60.1 198.0Q61.0 205.0 55.7 209.8M221.4 291.8Q222.5 301.5 223.7 311.3M95.9 350.6Q86.1 355.6 75.4 353.1M146.1 321.2Q151.9 325.8 153.4 333.1M261.9 248.8Q267.5 259.2 276.4 267.0M355.5 332.5Q354.9 346.2 361.0 358.5M319.8 300.2Q314.2 309.7 314.1 320.6M230.0 288.5Q236.4 291.6 240.3 297.5M214.7 229.2Q218.8 236.6 227.2 238.2M26.3 370.6Q15.3 374.9 9.5 385.2M250.2 2.7Q240.0 1.3 231.1 6.4M299.5 55.2Q305.3 58.2 311.8 56.8M291.2 91.2Q299.1 96.7 308.7 97.7M272.6 346.8Q259.6 345.4 247.1 349.4M6.0 2.6Q-3.9 8.7 -15.0 12.3M47.2 133.0Q52.6 141.9 57.3 151.3M74.4 32.8Q82.1 34.5 85.9 41.3M152.5 52.1Q143.9 58.7 134.9 64.9M235.2 94.0Q242.0 93.1 248.6 94.9M132.9 101.0Q143.9 109.9 148.4 123.2M165.2 153.2Q174.9 161.5 181.1 172.6M15.6 63.8Q6.7 67.5 -2.6 65.0M357.3 258.0Q348.0 256.8 339.5 260.5M15.2 95.0Q5.3 99.6 -1.8 107.8M142.0 350.5Q153.9 350.9 164.5 356.2M73.4 353.3Q78.0 365.9 79.2 379.2M268.7 363.0Q264.3 369.9 262.4 377.9M349.9 320.5Q354.8 329.4 353.3 339.4M282.8 63.3Q289.4 65.2 292.6 71.3M141.2 190.7Q148.5 197.6 158.0 200.9M35.7 54.2Q31.3 68.0 33.7 82.4M209.4 36.7Q194.4 39.5 181.9 48.2M195.4 153.1Q188.0 164.6 188.3 178.3M181.6 202.7Q187.4 211.9 193.8 220.7M104.2 183.3Q96.9 187.3 88.5 187.6M112.1 343.4Q117.1 356.3 127.7 365.3M322.3 321.7Q329.0 329.6 338.7 333.3M90.5 240.7Q77.7 247.5 64.0 252.1M43.9 12.4Q51.3 20.6 55.8 30.7M303.2 260.0Q299.5 273.0 293.2 285.0M239.2 140.3Q241.7 147.3 247.8 151.4M331.3 12.5Q327.7 18.0 323.1 22.7M116.5 361.1Q119.8 371.2 120.9 381.8M93.7 97.3Q99.6 98.9 105.7 99.7M271.7 268.2Q284.4 276.7 292.2 289.9M158.9 133.5Q170.3 142.8 183.6 149.1M48.4 70.8Q41.5 77.4 32.9 81.3M109.2 130.2Q106.0 138.4 104.3 147.1M23.3 214.1Q18.2 221.9 18.7 231.2M341.6 262.9Q342.7 270.3 345.7 277.3M106.4 66.0Q104.5 73.6 104.8 81.5M279.6 4.7Q277.6 12.3 273.3 18.8M266.1 386.1Q274.2 396.1 280.3 407.5M346.1 69.5Q342.4 75.1 339.5 81.2M273.5 365.3Q265.9 373.2 257.3 380.0" fill="none" stroke="#f3f5b8" stroke-width="1.6" stroke-linecap="round"/><path d="M127 120C129.5 116.5 140.2 116.7 143 119C145.8 121.3 144.5 130.2 144 134C143.5 137.8 142.7 141 140 142C137.3 143 130.2 143.7 128 140C125.8 136.3 124.5 123.5 127 120Z" fill="#aacbaf"/><path d="M77 121C78.3 119.2 83.7 119.2 85 121C86.3 122.8 86.3 130.2 85 132C83.7 133.8 78.3 133.8 77 132C75.7 130.2 75.7 122.8 77 121Z" fill="#aacbaf"/><path d="M12 114C13.7 110.7 19.3 111 22 112C24.7 113 27.2 116 28 120C28.8 124 28.7 132.7 27 136C25.3 139.3 20.5 140.7 18 140C15.5 139.3 13 136.3 12 132C11 127.7 10.3 117.3 12 114Z" fill="#aacbaf"/><path d="M220 34C221.8 32.3 228.2 32 232 32C235.8 32 241.2 32.5 243 34C244.8 35.5 244.8 39.5 243 41C241.2 42.5 235.7 42.8 232 43C228.3 43.2 223 43.5 221 42C219 40.5 218.2 35.7 220 34Z" fill="#add19e"/><path d="M269 85C270.3 83 276.5 83.5 280 84C283.5 84.5 288.7 85.8 290 88C291.3 90.2 291 95.7 288 97C285 98.3 275.2 98 272 96C268.8 94 267.7 87 269 85Z" fill="#c8facc"/><path d="M252 104C253.3 101.8 259.2 101.7 262 102C264.8 102.3 268 103.8 269 106C270 108.2 270.5 113.5 268 115C265.5 116.5 256.7 116.8 254 115C251.3 113.2 250.7 106.2 252 104Z" fill="#b5dba8"/><path d="M311 172C312 167.7 318.2 168 322 168C325.8 168 331.5 169 334 172C336.5 175 337.7 182 337 186C336.3 190 333.5 194.7 330 196C326.5 197.3 319.2 198 316 194C312.8 190 310 176.3 311 172Z" fill="#b5d7a5"/><path d="M281 192C282.7 189.3 288.5 186.3 292 186C295.5 185.7 300.5 187 302 190C303.5 193 303.3 201 301 204C298.7 207 291.2 208.3 288 208C284.8 207.7 283.2 204.7 282 202C280.8 199.3 279.3 194.7 281 192Z" fill="#b5d7a5"/><path d="M336 254C338 251.3 344.7 250.3 350 250C355.3 249.7 365 247.8 368 252C371 256.2 371 271.7 368 275C365 278.3 355 273.5 350 272C345 270.5 340.3 269 338 266C335.7 263 334 256.7 336 254Z" fill="#add19e"/><path d="M278 276C281 273.2 293 274.3 300 275C307 275.7 317 276.2 320 280C323 283.8 321.3 295.2 318 298C314.7 300.8 306 298 300 297C294 296 285.7 295.5 282 292C278.3 288.5 275 278.8 278 276Z" fill="#aacbaf"/><path d="M35 316C39.2 315.2 50.5 317 58 317C65.5 317 75.7 315.3 80 316C84.3 316.7 83.7 319.3 84 321C84.3 322.7 83.2 324.6 82 326C80.8 327.4 79.8 328 77 329.5C74.2 331 69.5 334.1 65 335C60.5 335.9 54.3 335.8 50 335C45.7 334.2 42.2 332.2 39.4 330C36.6 327.8 33.7 324.3 33 322C32.3 319.7 30.8 316.8 35 316Z" fill="#cdebb0"/><path d="M153 263C155.3 259.5 164 258.5 168 259C172 259.5 175.3 262.2 177 266C178.7 269.8 179.2 277 178 282C176.8 287 173.3 294 170 296C166.7 298 160.7 296.7 158 294C155.3 291.3 154.8 285.2 154 280C153.2 274.8 150.7 266.5 153 263Z" fill="#e4f0dc"/><path d="M0 184C2 180.3 8 181 12 182C16 183 22.3 186.3 24 190C25.7 193.7 24.7 201.3 22 204C19.3 206.7 11.7 206 8 206C4.3 206 1.3 207.7 0 204C-1.3 200.3 -2 187.7 0 184Z" fill="#b5d7a5"/><path d="M124 134C125.3 132.5 131.5 132.5 133 134C134.5 135.5 134.3 141.5 133 143C131.7 144.5 126.5 144.5 125 143C123.5 141.5 122.7 135.5 124 134Z" fill="#b5d7a5"/><path d="M199 141C201 139 207 138 212 138C217 138 226.3 138.7 229 141C231.7 143.3 231.2 149.8 228 152C224.8 154.2 214.7 154.3 210 154C205.3 153.7 201.8 152.2 200 150C198.2 147.8 197 143 199 141Z" fill="#d5ecc8"/><path d="M247.4 128.9C253.5 126.4 278.1 124.8 285.5 125.8C292.9 126.8 294.6 131.4 291.5 135C288.4 138.6 273.3 144.3 267.2 147.1C261.1 149.9 258.1 152.7 255 151.7C251.9 150.7 250.2 144.8 248.9 141C247.6 137.2 241.3 131.4 247.4 128.9Z" fill="#d5ecc8"/><path d="M296 60C296.8 56 305.7 55.7 310 56C314.3 56.3 320.3 58.3 322 62C323.7 65.7 322.8 75 320 78C317.2 81 309 83 305 80C301 77 295.2 64 296 60Z" fill="#c8facc"/><path d="M325 95C328 91.7 336.8 91.2 340 92C343.2 92.8 344.8 97 344 100C343.2 103 338.7 108 335 110C331.3 112 323.7 114.5 322 112C320.3 109.5 322 98.3 325 95Z" fill="#c8facc"/><path d="M246 291C248.3 287.3 258 288.5 262 290C266 291.5 269 295.7 270 300C271 304.3 270.3 313 268 316C265.7 319 259.3 318.7 256 318C252.7 317.3 249.7 316.5 248 312C246.3 307.5 243.7 294.7 246 291Z" fill="#efe6e0"/><path d="M79 172C80 169.5 88 170 92 171C96 172 101.5 174.8 103 178C104.5 181.2 103.8 188.7 101 190C98.2 191.3 89.7 189 86 186C82.3 183 78 174.5 79 172Z" fill="#f2efe9"/><path d="M10 60C11.3 57.7 18 56.3 20 58C22 59.7 23.3 67.7 22 70C20.7 72.3 14 73.7 12 72C10 70.3 8.7 62.3 10 60Z" fill="#c8facc"/><path d="M160 100C161.7 97.7 169.7 96.3 172 98C174.3 99.7 175.7 107.7 174 110C172.3 112.3 164.3 113.7 162 112C159.7 110.3 158.3 102.3 160 100Z" fill="#c8facc"/><path d="M350 40C351.5 39.5 357 32 360 30C363 28 366.7 31 368 28C369.3 25 369.7 13.7 368 12C366.3 10.3 360.8 14.5 358 18C355.2 21.5 352.3 29.3 351 33C349.7 36.7 348.5 40.5 350 40Z" fill="#b5d7a5"/><path d="M300 330C301.7 327.7 309.7 326.3 312 328C314.3 329.7 315.7 337.7 314 340C312.3 342.3 304.3 343.7 302 342C299.7 340.3 298.3 332.3 300 330Z" fill="#c8facc"/><path d="M340 300C341.7 298 349.7 296.7 352 298C354.3 299.3 355.7 306 354 308C352.3 310 344.3 311.3 342 310C339.7 308.7 338.3 302 340 300Z" fill="#c8facc"/><g fill="none" stroke-linecap="round" stroke-linejoin="round"><path d="M6 6C10 5.5 22.7 2 30 3C37.3 4 43.8 11 50 12C56.2 13 64.2 9.5 67 9M35 0C35.7 3 38.9 11.7 39.4 18C39.9 24.3 40.8 32.7 38 38C35.2 43.3 25.3 48 22.8 50M66.7 59C69.8 57.5 79 52 85 50C91 48 98 49 103 47C108 45 110.9 42.8 115 38C119.1 33.2 125.3 21.3 127.4 18M133.5 18C135.5 19.5 141.5 22.4 145.6 27C149.7 31.6 155.8 42.4 157.8 45.5M151.7 0C153.2 1.5 155.4 8 160.8 9C166.2 10 180.1 6.5 184 6M100 65C102.5 66 109.9 69.5 115 71C120.1 72.5 127.9 73.5 130.5 74M303.7 90.8C303.2 93.3 300.7 101.7 300.7 106C300.7 110.3 304.7 112.9 303.7 116.7C302.7 120.5 296.1 126.9 294.6 128.9M188 86C190.5 88.1 198.4 94.3 203 98.4C207.6 102.5 214.6 106.8 215.4 110.6C216.2 114.4 209.1 119.3 207.8 121M188 135C189.5 137.5 194.5 145.5 197 150C199.5 154.5 202 160 203 162M160 85C161.7 87.5 168 94.2 170 100C172 105.8 172.3 114.3 172 120C171.7 125.7 168.7 131.7 168 134M0 120C2 118.3 8.7 113.3 12 110C15.3 106.7 18.7 101.7 20 100M125 140C126.7 141.7 130.8 147 135 150C139.2 153 147.5 156.7 150 158M20 230C22.5 231.7 30 235.8 35 240C40 244.2 47.5 252.5 50 255M280 215C281.7 216.7 288.7 220.8 290 225C291.3 229.2 288.3 237.5 288 240M310 240C312 241.7 318.7 246.3 322 250C325.3 253.7 328.7 260 330 262M30 290 L29 310M70 288 L71 310M332.7 194.7C333.2 197.2 336.2 204.9 335.7 210C335.2 215.1 330.6 222.5 329.6 225M351 240C349.7 243 345.6 253.3 343 258C340.4 262.7 337.9 264.8 335.7 268C333.5 271.2 333.4 271.9 329.6 277C325.8 282.1 317.6 292.2 313 298.3C308.4 304.4 304.1 311 302.3 313.5M368 322.6C366.4 324.1 361.5 328 358.5 331.7C355.5 335.4 351.4 342.8 350 345M10 30C12.5 29.2 20 25.3 25 25C30 24.7 37.5 27.5 40 28M30 60C31.7 61.7 38.7 65.8 40 70C41.3 74.2 38.3 82.5 38 85M100 70C102.5 70.8 110 74.7 115 75C120 75.3 124.2 71.5 130 72C135.8 72.5 146.7 77 150 78M188 134C188.7 136.7 190 145.7 192 150C194 154.3 198 156.7 200 160C202 163.3 203.3 168.3 204 170M215 140C216.2 141.7 219.8 146.3 222 150C224.2 153.7 227 160 228 162M140 268C141.7 270 146.7 276.3 150 280C153.3 283.7 157 286.7 160 290C163 293.3 166.7 298.3 168 300M100 290C102.5 290.8 109.2 292.5 115 295C120.8 297.5 131.7 303.3 135 305M0 260C3.3 261.7 13.3 265.8 20 270C26.7 274.2 36.7 282.5 40 285M200 40C202.5 41.3 210.8 44.7 215 48C219.2 51.3 223.3 58 225 60M275 20C276.7 22.5 280.8 30.8 285 35C289.2 39.2 294.2 42.5 300 45C305.8 47.5 316.7 49.2 320 50M270 120C272.5 120.8 280 123.7 285 125C290 126.3 297.5 127.5 300 128M330 330C332.5 331.7 338.7 337.5 345 340C351.3 342.5 364.2 344.2 368 345M260 230C261.7 231.7 268.7 235 270 240C271.3 245 268.3 256.7 268 260" stroke="#cfcc8c" stroke-width="3.5"/><path d="M6 6C10 5.5 22.7 2 30 3C37.3 4 43.8 11 50 12C56.2 13 64.2 9.5 67 9M35 0C35.7 3 38.9 11.7 39.4 18C39.9 24.3 40.8 32.7 38 38C35.2 43.3 25.3 48 22.8 50M66.7 59C69.8 57.5 79 52 85 50C91 48 98 49 103 47C108 45 110.9 42.8 115 38C119.1 33.2 125.3 21.3 127.4 18M133.5 18C135.5 19.5 141.5 22.4 145.6 27C149.7 31.6 155.8 42.4 157.8 45.5M151.7 0C153.2 1.5 155.4 8 160.8 9C166.2 10 180.1 6.5 184 6M100 65C102.5 66 109.9 69.5 115 71C120.1 72.5 127.9 73.5 130.5 74M303.7 90.8C303.2 93.3 300.7 101.7 300.7 106C300.7 110.3 304.7 112.9 303.7 116.7C302.7 120.5 296.1 126.9 294.6 128.9M188 86C190.5 88.1 198.4 94.3 203 98.4C207.6 102.5 214.6 106.8 215.4 110.6C216.2 114.4 209.1 119.3 207.8 121M188 135C189.5 137.5 194.5 145.5 197 150C199.5 154.5 202 160 203 162M160 85C161.7 87.5 168 94.2 170 100C172 105.8 172.3 114.3 172 120C171.7 125.7 168.7 131.7 168 134M0 120C2 118.3 8.7 113.3 12 110C15.3 106.7 18.7 101.7 20 100M125 140C126.7 141.7 130.8 147 135 150C139.2 153 147.5 156.7 150 158M20 230C22.5 231.7 30 235.8 35 240C40 244.2 47.5 252.5 50 255M280 215C281.7 216.7 288.7 220.8 290 225C291.3 229.2 288.3 237.5 288 240M310 240C312 241.7 318.7 246.3 322 250C325.3 253.7 328.7 260 330 262M30 290 L29 310M70 288 L71 310M332.7 194.7C333.2 197.2 336.2 204.9 335.7 210C335.2 215.1 330.6 222.5 329.6 225M351 240C349.7 243 345.6 253.3 343 258C340.4 262.7 337.9 264.8 335.7 268C333.5 271.2 333.4 271.9 329.6 277C325.8 282.1 317.6 292.2 313 298.3C308.4 304.4 304.1 311 302.3 313.5M368 322.6C366.4 324.1 361.5 328 358.5 331.7C355.5 335.4 351.4 342.8 350 345M10 30C12.5 29.2 20 25.3 25 25C30 24.7 37.5 27.5 40 28M30 60C31.7 61.7 38.7 65.8 40 70C41.3 74.2 38.3 82.5 38 85M100 70C102.5 70.8 110 74.7 115 75C120 75.3 124.2 71.5 130 72C135.8 72.5 146.7 77 150 78M188 134C188.7 136.7 190 145.7 192 150C194 154.3 198 156.7 200 160C202 163.3 203.3 168.3 204 170M215 140C216.2 141.7 219.8 146.3 222 150C224.2 153.7 227 160 228 162M140 268C141.7 270 146.7 276.3 150 280C153.3 283.7 157 286.7 160 290C163 293.3 166.7 298.3 168 300M100 290C102.5 290.8 109.2 292.5 115 295C120.8 297.5 131.7 303.3 135 305M0 260C3.3 261.7 13.3 265.8 20 270C26.7 274.2 36.7 282.5 40 285M200 40C202.5 41.3 210.8 44.7 215 48C219.2 51.3 223.3 58 225 60M275 20C276.7 22.5 280.8 30.8 285 35C289.2 39.2 294.2 42.5 300 45C305.8 47.5 316.7 49.2 320 50M270 120C272.5 120.8 280 123.7 285 125C290 126.3 297.5 127.5 300 128M330 330C332.5 331.7 338.7 337.5 345 340C351.3 342.5 364.2 344.2 368 345M260 230C261.7 231.7 268.7 235 270 240C271.3 245 268.3 256.7 268 260" stroke="#f7fabf" stroke-width="2.6"/><path d="M0 14C3.3 13.7 12.5 11.8 20 12C27.5 12.2 37.3 14.7 45 15C52.7 15.3 61.3 15.5 66 14C70.7 12.5 71.8 8.3 73 6C74.2 3.7 73 1 73 0M0 52C2.5 51.7 10 51.7 15 50C20 48.3 24.2 44 30 42C35.8 40 45 39.7 50 38C55 36.3 57 33.3 60 32C63 30.7 66.2 32.3 68 30C69.8 27.7 70.5 20 71 18M64 71C67.5 70.5 78 69.2 85 68C92 66.8 100.5 67.8 106 64C111.5 60.2 113.7 52.3 118 45C122.3 37.7 128.3 24.8 132 20C135.7 15.2 137 15.2 140 16C143 16.8 146.7 21 150 25C153.3 29 157 35 160 40C163 45 166.7 52.5 168 55M179 61C179.3 65.8 180.5 81.5 181 90C181.5 98.5 182.2 104.7 182 112C181.8 119.3 180.8 125.3 180 134C179.2 142.7 179.2 156.3 177 164C174.8 171.7 173.8 174.3 167 180C160.2 185.7 144.2 193.8 136.5 198C128.8 202.2 123.6 203.8 121 205M97 105C99.5 104.8 108 103.7 112 104C116 104.3 118.7 104.2 121 107C123.3 109.8 126 116.5 126 121C126 125.5 122 128 121 134C120 140 120 149.3 120 157C120 164.7 121 173.2 121 180C121 186.8 120 193 120 198C120 203 121 206 121 210C121 214 120.2 220 120 222M179 64C175.8 66.7 167.8 75 160 80C152.2 85 137.8 89.3 132 94C126.2 98.7 126.2 105.7 125 108M64 71C65 73.3 68.7 80.2 70 85C71.3 89.8 72.7 95.8 72 100C71.3 104.2 69.7 106.7 66 110C62.3 113.3 54 116.7 50 120C46 123.3 43.3 128.3 42 130M50 38C49.7 40.8 48 48.8 48 55C48 61.2 48.8 69.2 50 75C51.2 80.8 55.3 85.8 55 90C54.7 94.2 51.3 97 48 100C44.7 103 38.3 105 35 108C31.7 111 29.7 113.7 28 118C26.3 122.3 24.2 128.3 25 134C25.8 139.7 29.8 146.3 33 152C36.2 157.7 39.8 162.7 44 168C48.2 173.3 53.7 178.3 58 184C62.3 189.7 65.8 196.8 70 202C74.2 207.2 78.8 211.5 83 215C87.2 218.5 91.8 220 95 223C98.2 226 99.5 229.3 102 233C104.5 236.7 106.7 242 110 245C113.3 248 116.3 249.2 122 251C127.7 252.8 137.7 254.8 144 256C150.3 257.2 155.3 257 160 258C164.7 259 170 261.3 172 262M0 99C2.5 97.8 10.3 95.2 15 92C19.7 88.8 22.5 83.7 28 80C33.5 76.3 44.7 71.7 48 70M245 0C246.7 3.3 252.3 13.7 255 20C257.7 26.3 260.5 31.3 261 38C261.5 44.7 260.2 52.2 258 60C255.8 67.8 250.3 76.7 248 85C245.7 93.3 245 101.8 244 110C243 118.2 243 127.3 242 134C241 140.7 239.8 145.2 238 150C236.2 154.8 232.2 160.8 231 163M344 80C342.2 80.5 336.9 81.7 333 83C329.1 84.3 323.5 85 320.5 88C317.5 91 317 95.9 315 101C313 106.1 310.8 113.9 308.5 118.5C306.2 123.1 304.4 125.8 301.5 128.5C298.6 131.2 294.8 132.2 291 134.5C287.2 136.8 283.9 139 279 142C274.1 145 266.9 149.8 261.5 152.5C256.1 155.2 252 156.8 246.5 158.5C241 160.2 234.9 161.5 228.5 163C222.1 164.5 212.7 165.8 208 167.5C203.3 169.2 202.7 170.2 200.5 173C198.3 175.8 197.2 180.3 195 184C192.8 187.7 189.8 191.8 187.5 195C185.2 198.2 183.9 200.1 181 203C178.1 205.9 173.8 209.5 170 212.5C166.2 215.5 161.3 219.2 158 221C154.7 222.8 151.3 223.1 150 223.5M50 140C52 141.8 58.3 146.8 62 151C65.7 155.2 69.3 160.5 72 165C74.7 169.5 77 175.8 78 178M0 184C4 186.5 16.4 193.2 24 199C31.6 204.8 38.9 212.2 45.5 219C52.1 225.8 57.9 231.8 63.7 240C69.5 248.2 77.6 263.3 80.4 268M38 180C37.5 183 37.3 194.8 35 198C32.7 201.2 25.8 198.8 24 199M0 219C3.8 222.5 15.2 232.7 22.8 240C30.4 247.3 38 256.1 45.5 263C53 269.9 62.2 278.3 68 281.6C73.8 284.9 78 282.8 80 283M104 231C102.8 232.5 100.2 234.8 97 240C93.8 245.2 87.8 256.7 85 262C82.2 267.3 80.8 264 80 272C79.2 280 80 303.7 80 310M132.4 250.3C134.1 248.2 140.7 241.5 142.8 237.6C144.9 233.7 141.2 230.8 145 227C148.8 223.2 160.1 217.6 165.9 214.5C171.7 211.4 175.8 211.8 179.7 208.7C183.5 205.6 187.4 198.1 189 196M368 140.5C365.2 142.1 356.3 147 351 149.8C345.7 152.6 340.5 154.2 336 157.2C331.5 160.2 328.3 164.9 324 168C319.7 171.1 314.2 173.2 310 175.8C305.8 178.4 302.8 180.5 299 183.5C295.2 186.5 291 190.8 287 194C283 197.2 278.8 199.9 275 203C271.2 206.1 269 209.2 264 212.5C259 215.8 249.5 219.9 245 223C240.5 226.1 238.5 228.2 237 231C235.5 233.8 235.5 236.8 236 240C236.5 243.2 238.3 246.7 240 250C241.7 253.3 244.5 257 246 260C247.5 263 248.2 264.2 249 268C249.8 271.8 250.7 278.7 250.7 283C250.7 287.3 249.3 292.2 249 294M259.9 225C260.1 227 258.9 232.9 261.4 237C263.9 241.1 270.2 245.5 275 249.3C279.8 253.1 286 256.9 290 260C294 263.1 297.5 266.7 299 268M288.7 214.4C292.5 214.2 306.1 210.7 311.4 213C316.7 215.3 316.4 225 320.5 228C324.6 231 330.6 230 335.7 231C340.8 232 345.6 234 351 234C356.4 234 365.2 231.5 368 231M320.5 228C320 230.5 321.1 236.9 317.5 243C313.9 249.1 303.6 259.2 299 264.5C294.4 269.8 293 271.4 290 275C287 278.6 280.5 282.2 281 286C281.5 289.8 290 292.9 293 298C296 303.1 296.2 313.2 299 316.5C301.8 319.8 308.2 317.8 310 318M281 306C281.8 309 284.3 317.2 285.6 324C286.9 330.8 288 342.2 288.7 347C289.4 351.8 289.8 352 290 353M313 304.4C312.5 306.7 311.3 313.9 310 318C308.7 322.1 304.4 323.9 305.4 328.7C306.4 333.5 313 342.9 316 347C319 351.1 319.6 350.5 323.6 353C327.6 355.5 332.6 358 340 362C347.4 366 363.3 374.5 368 377M368 280C365.2 283 356.4 292.7 351 298C345.6 303.3 341.5 308.7 335.7 312C329.9 315.3 319.3 317 316 318M151.7 316C153.8 315 160.2 313 164 310C167.8 307 172.1 302.7 174.5 298C176.9 293.3 177.8 287 178.5 282C179.2 277 179.2 271.8 178.5 268C177.8 264.2 176.8 261.4 174 259.5C171.2 257.6 164 257 162 256.5M200 0C200.8 2 205.7 7.8 205 12C204.3 16.2 198.5 20.3 196 25C193.5 29.7 191.7 34 190 40C188.3 46 186.7 57.5 186 61M300 0C301.7 1.7 305 8.7 310 10C315 11.3 324.2 6.3 330 8C335.8 9.7 342.5 18 345 20M150 134C150.8 136.7 152.5 144.8 155 150C157.5 155.2 161.5 161.7 165 165C168.5 168.3 174.2 169.2 176 170M0 300C2.5 299.3 10.2 297.7 15 296C19.8 294.3 24 290.7 29 290C34 289.3 38.2 292.3 45 292C51.8 291.7 65.8 288.7 70 288M330 260C331.7 262.5 335.8 270.8 340 275C344.2 279.2 350.3 282.5 355 285C359.7 287.5 365.8 289.2 368 290M296 380C297.5 378.3 301.7 373.3 305 370C308.3 366.7 312.9 362.8 316 360C319.1 357.2 322.3 354.2 323.6 353M290 353C290.3 355.8 290.3 364.7 292 370C293.7 375.3 297 380 300 385C303 390 308.3 397.5 310 400" stroke="#d3a05a" stroke-width="4.3"/><path d="M0 14C3.3 13.7 12.5 11.8 20 12C27.5 12.2 37.3 14.7 45 15C52.7 15.3 61.3 15.5 66 14C70.7 12.5 71.8 8.3 73 6C74.2 3.7 73 1 73 0M0 52C2.5 51.7 10 51.7 15 50C20 48.3 24.2 44 30 42C35.8 40 45 39.7 50 38C55 36.3 57 33.3 60 32C63 30.7 66.2 32.3 68 30C69.8 27.7 70.5 20 71 18M64 71C67.5 70.5 78 69.2 85 68C92 66.8 100.5 67.8 106 64C111.5 60.2 113.7 52.3 118 45C122.3 37.7 128.3 24.8 132 20C135.7 15.2 137 15.2 140 16C143 16.8 146.7 21 150 25C153.3 29 157 35 160 40C163 45 166.7 52.5 168 55M179 61C179.3 65.8 180.5 81.5 181 90C181.5 98.5 182.2 104.7 182 112C181.8 119.3 180.8 125.3 180 134C179.2 142.7 179.2 156.3 177 164C174.8 171.7 173.8 174.3 167 180C160.2 185.7 144.2 193.8 136.5 198C128.8 202.2 123.6 203.8 121 205M97 105C99.5 104.8 108 103.7 112 104C116 104.3 118.7 104.2 121 107C123.3 109.8 126 116.5 126 121C126 125.5 122 128 121 134C120 140 120 149.3 120 157C120 164.7 121 173.2 121 180C121 186.8 120 193 120 198C120 203 121 206 121 210C121 214 120.2 220 120 222M179 64C175.8 66.7 167.8 75 160 80C152.2 85 137.8 89.3 132 94C126.2 98.7 126.2 105.7 125 108M64 71C65 73.3 68.7 80.2 70 85C71.3 89.8 72.7 95.8 72 100C71.3 104.2 69.7 106.7 66 110C62.3 113.3 54 116.7 50 120C46 123.3 43.3 128.3 42 130M50 38C49.7 40.8 48 48.8 48 55C48 61.2 48.8 69.2 50 75C51.2 80.8 55.3 85.8 55 90C54.7 94.2 51.3 97 48 100C44.7 103 38.3 105 35 108C31.7 111 29.7 113.7 28 118C26.3 122.3 24.2 128.3 25 134C25.8 139.7 29.8 146.3 33 152C36.2 157.7 39.8 162.7 44 168C48.2 173.3 53.7 178.3 58 184C62.3 189.7 65.8 196.8 70 202C74.2 207.2 78.8 211.5 83 215C87.2 218.5 91.8 220 95 223C98.2 226 99.5 229.3 102 233C104.5 236.7 106.7 242 110 245C113.3 248 116.3 249.2 122 251C127.7 252.8 137.7 254.8 144 256C150.3 257.2 155.3 257 160 258C164.7 259 170 261.3 172 262M0 99C2.5 97.8 10.3 95.2 15 92C19.7 88.8 22.5 83.7 28 80C33.5 76.3 44.7 71.7 48 70M245 0C246.7 3.3 252.3 13.7 255 20C257.7 26.3 260.5 31.3 261 38C261.5 44.7 260.2 52.2 258 60C255.8 67.8 250.3 76.7 248 85C245.7 93.3 245 101.8 244 110C243 118.2 243 127.3 242 134C241 140.7 239.8 145.2 238 150C236.2 154.8 232.2 160.8 231 163M344 80C342.2 80.5 336.9 81.7 333 83C329.1 84.3 323.5 85 320.5 88C317.5 91 317 95.9 315 101C313 106.1 310.8 113.9 308.5 118.5C306.2 123.1 304.4 125.8 301.5 128.5C298.6 131.2 294.8 132.2 291 134.5C287.2 136.8 283.9 139 279 142C274.1 145 266.9 149.8 261.5 152.5C256.1 155.2 252 156.8 246.5 158.5C241 160.2 234.9 161.5 228.5 163C222.1 164.5 212.7 165.8 208 167.5C203.3 169.2 202.7 170.2 200.5 173C198.3 175.8 197.2 180.3 195 184C192.8 187.7 189.8 191.8 187.5 195C185.2 198.2 183.9 200.1 181 203C178.1 205.9 173.8 209.5 170 212.5C166.2 215.5 161.3 219.2 158 221C154.7 222.8 151.3 223.1 150 223.5M50 140C52 141.8 58.3 146.8 62 151C65.7 155.2 69.3 160.5 72 165C74.7 169.5 77 175.8 78 178M0 184C4 186.5 16.4 193.2 24 199C31.6 204.8 38.9 212.2 45.5 219C52.1 225.8 57.9 231.8 63.7 240C69.5 248.2 77.6 263.3 80.4 268M38 180C37.5 183 37.3 194.8 35 198C32.7 201.2 25.8 198.8 24 199M0 219C3.8 222.5 15.2 232.7 22.8 240C30.4 247.3 38 256.1 45.5 263C53 269.9 62.2 278.3 68 281.6C73.8 284.9 78 282.8 80 283M104 231C102.8 232.5 100.2 234.8 97 240C93.8 245.2 87.8 256.7 85 262C82.2 267.3 80.8 264 80 272C79.2 280 80 303.7 80 310M132.4 250.3C134.1 248.2 140.7 241.5 142.8 237.6C144.9 233.7 141.2 230.8 145 227C148.8 223.2 160.1 217.6 165.9 214.5C171.7 211.4 175.8 211.8 179.7 208.7C183.5 205.6 187.4 198.1 189 196M368 140.5C365.2 142.1 356.3 147 351 149.8C345.7 152.6 340.5 154.2 336 157.2C331.5 160.2 328.3 164.9 324 168C319.7 171.1 314.2 173.2 310 175.8C305.8 178.4 302.8 180.5 299 183.5C295.2 186.5 291 190.8 287 194C283 197.2 278.8 199.9 275 203C271.2 206.1 269 209.2 264 212.5C259 215.8 249.5 219.9 245 223C240.5 226.1 238.5 228.2 237 231C235.5 233.8 235.5 236.8 236 240C236.5 243.2 238.3 246.7 240 250C241.7 253.3 244.5 257 246 260C247.5 263 248.2 264.2 249 268C249.8 271.8 250.7 278.7 250.7 283C250.7 287.3 249.3 292.2 249 294M259.9 225C260.1 227 258.9 232.9 261.4 237C263.9 241.1 270.2 245.5 275 249.3C279.8 253.1 286 256.9 290 260C294 263.1 297.5 266.7 299 268M288.7 214.4C292.5 214.2 306.1 210.7 311.4 213C316.7 215.3 316.4 225 320.5 228C324.6 231 330.6 230 335.7 231C340.8 232 345.6 234 351 234C356.4 234 365.2 231.5 368 231M320.5 228C320 230.5 321.1 236.9 317.5 243C313.9 249.1 303.6 259.2 299 264.5C294.4 269.8 293 271.4 290 275C287 278.6 280.5 282.2 281 286C281.5 289.8 290 292.9 293 298C296 303.1 296.2 313.2 299 316.5C301.8 319.8 308.2 317.8 310 318M281 306C281.8 309 284.3 317.2 285.6 324C286.9 330.8 288 342.2 288.7 347C289.4 351.8 289.8 352 290 353M313 304.4C312.5 306.7 311.3 313.9 310 318C308.7 322.1 304.4 323.9 305.4 328.7C306.4 333.5 313 342.9 316 347C319 351.1 319.6 350.5 323.6 353C327.6 355.5 332.6 358 340 362C347.4 366 363.3 374.5 368 377M368 280C365.2 283 356.4 292.7 351 298C345.6 303.3 341.5 308.7 335.7 312C329.9 315.3 319.3 317 316 318M151.7 316C153.8 315 160.2 313 164 310C167.8 307 172.1 302.7 174.5 298C176.9 293.3 177.8 287 178.5 282C179.2 277 179.2 271.8 178.5 268C177.8 264.2 176.8 261.4 174 259.5C171.2 257.6 164 257 162 256.5M200 0C200.8 2 205.7 7.8 205 12C204.3 16.2 198.5 20.3 196 25C193.5 29.7 191.7 34 190 40C188.3 46 186.7 57.5 186 61M300 0C301.7 1.7 305 8.7 310 10C315 11.3 324.2 6.3 330 8C335.8 9.7 342.5 18 345 20M150 134C150.8 136.7 152.5 144.8 155 150C157.5 155.2 161.5 161.7 165 165C168.5 168.3 174.2 169.2 176 170M0 300C2.5 299.3 10.2 297.7 15 296C19.8 294.3 24 290.7 29 290C34 289.3 38.2 292.3 45 292C51.8 291.7 65.8 288.7 70 288M330 260C331.7 262.5 335.8 270.8 340 275C344.2 279.2 350.3 282.5 355 285C359.7 287.5 365.8 289.2 368 290M296 380C297.5 378.3 301.7 373.3 305 370C308.3 366.7 312.9 362.8 316 360C319.1 357.2 322.3 354.2 323.6 353M290 353C290.3 355.8 290.3 364.7 292 370C293.7 375.3 297 380 300 385C303 390 308.3 397.5 310 400" stroke="#fcd6a4" stroke-width="3.3"/><path d="M102 0C101.2 3 98.8 12.2 97 18C95.2 23.8 93.5 29.3 91 35C88.5 40.7 85 46 82 52C79 58 74.5 67.8 73 71M92 58C91.8 61.7 91.2 73.5 91 80C90.8 86.5 90 92.8 91 97C92 101.2 96 103.7 97 105M245 112C247.2 110.7 254 106.5 258 104C262 101.5 267.2 98.2 269 97" stroke="#e27a90" stroke-width="1.8"/><path d="M262 58C258.7 58.5 249.8 60.2 242 61C234.2 61.8 224.7 62.8 215 63C205.3 63.2 191.5 62.5 184 62C176.5 61.5 175.3 60 170 60C164.7 60 157 60 152 62C147 64 144.5 67.7 140 72C135.5 76.3 130 83.3 125 88C120 92.7 114.7 97 110 100C105.3 103 102 103 97 106C92 109 86.5 113.3 80 118C73.5 122.7 65 126.3 58 134C51 141.7 45.2 155.3 38 164C30.8 172.7 21.3 180.2 15 186C8.7 191.8 2.5 196.8 0 199M0 358C1.3 356 5.2 349.9 8 346C10.8 342.1 13.9 338.7 16.7 334.7C19.5 330.7 21.7 325.6 25 322C28.3 318.4 31 314.1 36.4 313C41.8 311.9 50.5 315.8 57.6 315.5C64.7 315.2 73.4 312.8 79 311.5C84.6 310.2 86 308.2 91 308C96 307.8 101.4 309.5 109 310.5C116.6 311.5 129.4 313.2 136.5 314C143.6 314.8 149.2 315.2 151.7 315.5M247.7 300C251.4 299.8 262.9 299.3 270 299C277.1 298.7 282.8 297.2 290 298C297.2 298.8 305.4 301.7 313 304C320.6 306.3 326.5 309.4 335.7 312C344.9 314.6 362.6 318.3 368 319.6M351 219C352 222 354.2 235 357 237C359.8 239 366.2 232 368 231M357 237C358 239 361.2 244.8 363 249C364.8 253.2 367.2 259.8 368 262" stroke="#d98a72" stroke-width="5.2"/><path d="M262 58C258.7 58.5 249.8 60.2 242 61C234.2 61.8 224.7 62.8 215 63C205.3 63.2 191.5 62.5 184 62C176.5 61.5 175.3 60 170 60C164.7 60 157 60 152 62C147 64 144.5 67.7 140 72C135.5 76.3 130 83.3 125 88C120 92.7 114.7 97 110 100C105.3 103 102 103 97 106C92 109 86.5 113.3 80 118C73.5 122.7 65 126.3 58 134C51 141.7 45.2 155.3 38 164C30.8 172.7 21.3 180.2 15 186C8.7 191.8 2.5 196.8 0 199M0 358C1.3 356 5.2 349.9 8 346C10.8 342.1 13.9 338.7 16.7 334.7C19.5 330.7 21.7 325.6 25 322C28.3 318.4 31 314.1 36.4 313C41.8 311.9 50.5 315.8 57.6 315.5C64.7 315.2 73.4 312.8 79 311.5C84.6 310.2 86 308.2 91 308C96 307.8 101.4 309.5 109 310.5C116.6 311.5 129.4 313.2 136.5 314C143.6 314.8 149.2 315.2 151.7 315.5M247.7 300C251.4 299.8 262.9 299.3 270 299C277.1 298.7 282.8 297.2 290 298C297.2 298.8 305.4 301.7 313 304C320.6 306.3 326.5 309.4 335.7 312C344.9 314.6 362.6 318.3 368 319.6M351 219C352 222 354.2 235 357 237C359.8 239 366.2 232 368 231M357 237C358 239 361.2 244.8 363 249C364.8 253.2 367.2 259.8 368 262" stroke="#f9b29c" stroke-width="4.2"/></g><g fill="none" stroke-linecap="round" stroke-linejoin="round"><path d="M60 72C61.7 71.3 66.3 69.7 70 68C73.7 66.3 77.8 63.7 82 62C86.2 60.3 90.7 60.3 95 58C99.3 55.7 104.2 51.7 108 48C111.8 44.3 115 40.3 118 36C121 31.7 123.5 25.7 126 22C128.5 18.3 131.8 15.3 133 14" stroke="#bfe8c4" stroke-width="3.4"/><path d="M60 72C61.7 71.3 66.3 69.7 70 68C73.7 66.3 77.8 63.7 82 62C86.2 60.3 90.7 60.3 95 58C99.3 55.7 104.2 51.7 108 48C111.8 44.3 115 40.3 118 36C121 31.7 123.5 25.7 126 22C128.5 18.3 131.8 15.3 133 14" stroke="#a5d5dc" stroke-width="1.4"/><path d="M70 30C68.7 31.2 64.8 34.5 62 37C59.2 39.5 54.7 41.5 53 45C51.3 48.5 51.5 53.8 52 58C52.5 62.2 55.3 68 56 70" stroke="#8aa6b8" stroke-width="1.3"/><path d="M58 72C58.2 73.3 58.3 77 59 80C59.7 83 61.2 87 62 90C62.8 93 64.7 95.3 64 98C63.3 100.7 60.8 103.3 58 106C55.2 108.7 50.3 111.5 47 114C43.7 116.5 40.1 118.7 38 121C35.9 123.3 34.8 125.7 34.5 128C34.2 130.3 34.8 132.8 36 135C37.2 137.2 40.3 139.2 42 141C43.7 142.8 45.3 145.2 46 146" stroke="#6fae98" stroke-width="11.5"/><path d="M58 72C58.2 73.3 58.3 77 59 80C59.7 83 61.2 87 62 90C62.8 93 64.7 95.3 64 98C63.3 100.7 60.8 103.3 58 106C55.2 108.7 50.3 111.5 47 114C43.7 116.5 40.1 118.7 38 121C35.9 123.3 34.8 125.7 34.5 128C34.2 130.3 34.8 132.8 36 135C37.2 137.2 40.3 139.2 42 141C43.7 142.8 45.3 145.2 46 146" stroke="#aad3df" stroke-width="5"/></g><path d="M42 136 L51.5 140.7 L61.4 150.6 L69.3 160.5 L75 170.4 L79 180.3 L88 189 L108 199 L72 204 L69 200 L64 190 L59.4 180.3 L51.5 170.4 L43.5 160.5 L39.6 150.6 L34.6 140.7 L37 136Z" fill="#7db7a2"/><path d="M380 5 L368 12 L357.5 17.3 L351 33.6 L347 48 L346.5 66 L345 82.6 L335 86 L323 89.5 L318.3 102 L311.8 121.8 L305 130 L299 134 L293 137 L281 144.6 L262.9 155.2 L247.7 161.3 L229.5 165.9 L210 170.5 L203.7 175 L199 181 L197.6 187 L197 193.7 L192.4 201.8 L183.2 212.2 L177.4 217.9 L165.9 223.7 L154.3 230.6 L145.1 236.4 L142.8 237.8 L126.6 237.6 L122 235.2 L119.7 223.7 L120.5 213 L119 206.8 L116.2 203 L108.2 197.2 L100 192.5 L90.9 190.2 L86 190 L78 180.3 L72 170.4 L67.3 160.5 L57.4 150.6 L46.5 140.7 L42 137 L37.6 140.7 L41.6 150.6 L47.5 160.5 L55 170.4 L63 180.3 L69 190 L74 200 L85 212.2 L95.5 219 L101.2 229.5 L108.2 238.7 L116.2 245.6 L126.6 249 L133.6 251.4 L145 254.9 L160 257.2 L172.8 256 L178.6 259.5 L181 271 L178 281 L174.5 298 L163.8 310.5 L151.7 316.5 L136.5 315.5 L115 315.5 L110 319 L103 316 L90 314 L85 312.5 L80.4 316.5 L84 321 L100 325 L98 328 L82 326 L77.4 329.5 L65 335 L50 335 L39.4 330 L33 322 L21 328.7 L15 339 L8 350 L6 355 L0 360 L-10 362 L-10 410 L276.5 410 L276.5 400 L273.5 386 L272 374 L266 362 L259.9 353 L269 350 L284 347.5 L283 343 L281 339.3 L269 328.7 L259.9 319.6 L247.7 313.5 L241.6 303 L244.7 295 L237 289 L234 280 L244.7 274 L247.7 268 L244.7 260 L238.6 249.3 L234 240 L235.6 228 L244.7 220.5 L264.4 209.9 L275 200.7 L287 191.6 L299.3 181 L310 173.4 L323.6 165.9 L335.7 155 L350.9 147.6 L368 138.5 L380 133Z" fill="#aad3df" stroke="#8fbfb0" stroke-width="2" stroke-linejoin="round"/><g fill="none" stroke-linecap="butt" stroke-linejoin="round"><path d="M262 58C261.3 59.7 258.2 64.5 258 68C257.8 71.5 259.2 74.2 261 79C262.8 83.8 264.2 91.5 269 97C273.8 102.5 284 106.5 290 112C296 117.5 300.5 124 305 130C309.5 136 312.9 142.3 317 148C321.1 153.7 325.2 159.1 329.6 164.3C334 169.6 340.3 173.9 343.3 179.5C346.3 185.1 346.5 191.1 347.8 197.7C349.1 204.3 350.4 215.4 350.9 219" stroke="#c9627a" stroke-width="4.8"/><path d="M262 58C261.3 59.7 258.2 64.5 258 68C257.8 71.5 259.2 74.2 261 79C262.8 83.8 264.2 91.5 269 97C273.8 102.5 284 106.5 290 112C296 117.5 300.5 124 305 130C309.5 136 312.9 142.3 317 148C321.1 153.7 325.2 159.1 329.6 164.3C334 169.6 340.3 173.9 343.3 179.5C346.3 185.1 346.5 191.1 347.8 197.7C349.1 204.3 350.4 215.4 350.9 219" stroke="#e892a2" stroke-width="3.8"/><path d="M151.7 315.5C153.7 314.9 158.4 313.8 163.8 312C169.2 310.2 176.8 307.3 184 305C191.2 302.7 199.2 299 206.8 298C214.4 297 222.7 298.7 229.5 299C236.3 299.3 244.7 299.8 247.7 300" stroke="#f3b7a6" stroke-width="2.6" opacity=".9"/><path d="M101 231L120 222M132.400 250.300L142.800 237.600" stroke="#d3a05a" stroke-width="4"/><path d="M101 231L120 222M132.400 250.300L142.800 237.600" stroke="#fcd6a4" stroke-width="3"/><path d="M58 134L48 148 40 160" stroke="#f9b29c" stroke-width="3.4"/><path d="M176 254C178.8 252.8 186.5 249.3 193 246.5C199.5 243.7 207.9 240.1 215 237C222.1 233.9 232.2 229.5 235.6 228" stroke="#757575" stroke-width="2.3" stroke-dasharray="5 1.5"/><path d="M235.6 228C239.7 226.9 251.6 222.6 260 221.5C268.4 220.4 279.7 218.5 286 221.5C292.3 224.5 295.5 232.6 298 239.7C300.5 246.8 299.5 253.8 301 264C302.5 274.2 306.9 291.4 307.2 300.7C307.5 310 304.2 313.4 303 320C301.8 326.6 300.5 336.7 300 340" stroke="#8c8c8c" stroke-width="1.5"/></g><path d="M86 312C88 313.3 93.7 317.5 98 320C102.3 322.5 109.7 325.8 112 327M112 327C109.2 330 103.7 338.2 95 345C86.3 351.8 72.5 360.8 60 368C47.5 375.2 30 383 20 388C10 393 3.3 396.3 0 398M112 327C109.7 330.5 105 340.8 98 348C91 355.2 81.3 362.7 70 370C58.7 377.3 40 387 30 392C20 397 13.3 398.7 10 400M112 327C111 330.8 108.8 342 106 350C103.2 358 98.5 366.7 95 375C91.5 383.3 86.7 395.8 85 400M112 327C112.7 331.2 114.8 343.5 116 352C117.2 360.5 118.2 370 119 378C119.8 386 120.7 396.3 121 400M112 327C115.8 330 127 339.2 135 345C143 350.8 151.8 356.5 160 362C168.2 367.5 177.3 373.7 184 378C190.7 382.3 197.3 386.3 200 388M112 327C116.7 327.8 130.3 330.5 140 332C149.7 333.5 162.7 335.2 170 336C177.3 336.8 181.7 336.8 184 337M0 392C10 390.8 41.7 388 60 385C78.3 382 95 377.2 110 374C125 370.8 137.7 368.2 150 366C162.3 363.8 178.3 361.8 184 361M184 361C189.2 360 204.8 356.8 215 355C225.2 353.2 237.2 351 245 350C252.8 349 259.2 349.2 262 349M184 337C186.7 338.3 192.3 342.5 200 345C207.7 347.5 219.7 351 230 352C240.3 353 256.7 351.2 262 351M184 378C183 380 180 386.3 178 390C176 393.7 173 398.3 172 400M200 388 L230 400M184 330C185 333.3 182.3 347.5 190 350C197.7 352.5 218 345.2 230 345C242 344.8 256.7 348.3 262 349M200 400C202.5 395 209.2 378 215 370C220.8 362 227.2 355.3 235 352C242.8 348.7 257.5 350.3 262 350M245 400C245.5 395.8 245.8 383 248 375C250.2 367 256.3 355.8 258 352M252 400C252.2 396.7 251.7 387.5 253 380C254.3 372.5 258.8 359.2 260 355M262 400C262 396.7 261.8 387.3 262 380C262.2 372.7 262.8 360 263 356M150 240C154.2 238.7 167.5 235 175 232C182.5 229 189.2 224.8 195 222C200.8 219.2 207.5 216.2 210 215M150 244C154.7 243 169.7 240.3 178 238C186.3 235.7 191 231.7 200 230C209 228.3 226.7 228.3 232 228M155 248C160 247.7 175 247.3 185 246C195 244.7 207.2 242.3 215 240C222.8 237.7 229.2 233.3 232 232M180 250C183.3 252 194.2 257 200 262C205.8 267 210.8 273.7 215 280C219.2 286.3 220.8 293.3 225 300C229.2 306.7 233.8 312.5 240 320C246.2 327.5 258.3 340.8 262 345M185 245C188.3 247.2 198.8 252.5 205 258C211.2 263.5 217.5 271 222 278C226.5 285 227.7 292.2 232 300C236.3 307.8 242.7 317.2 248 325C253.3 332.8 261.3 343.3 264 347M190 240C193.7 242.7 205.7 250 212 256C218.3 262 223.7 269 228 276C232.3 283 234 290.3 238 298C242 305.7 247.3 313.7 252 322C256.7 330.3 263.7 343.7 266 348M196 225C197.5 228.3 202.3 237.5 205 245C207.7 252.5 209.8 262.5 212 270C214.2 277.5 214.7 283.3 218 290C221.3 296.7 225.8 302 232 310C238.2 318 251.2 333.3 255 338M210 215C210.7 219.2 212.3 232.2 214 240C215.7 247.8 217.7 255 220 262C222.3 269 226.7 278.7 228 282M232 228C231 231.7 227.3 243 226 250C224.7 257 223.3 263.3 224 270C224.7 276.7 228 285 230 290C232 295 235 298.3 236 300M205 195C209.2 192.5 220.5 185 230 180C239.5 175 252 170.3 262 165C272 159.7 281.2 154.7 290 148C298.8 141.3 307.5 133.8 315 125C322.5 116.2 329.2 105.8 335 95C340.8 84.2 345.8 70.8 350 60C354.2 49.2 358.3 35 360 30M215 205C220 202.5 235 195.5 245 190C255 184.5 265.8 177.8 275 172C284.2 166.2 291.7 162 300 155C308.3 148 318 139.2 325 130C332 120.8 337 110.8 342 100C347 89.2 351.3 75.8 355 65C358.7 54.2 362.5 40 364 35M225 215C230 212.5 245 205.8 255 200C265 194.2 275.8 186.7 285 180C294.2 173.3 302.2 167.5 310 160C317.8 152.5 325.3 144.2 332 135C338.7 125.8 345.3 115 350 105C354.7 95 357.3 84.2 360 75C362.7 65.8 365 54.2 366 50M238 190C241.7 190.8 253.8 193.3 260 195C266.2 196.7 272.5 199.2 275 200M238 165C239.2 168.3 242.2 178.3 245 185C247.8 191.7 252.2 200.5 255 205C257.8 209.5 260.8 210.8 262 212M238 165C236.3 169.2 231.8 182.5 228 190C224.2 197.5 218.8 204.2 215 210C211.2 215.8 206.7 222.5 205 225M262 160C264.2 162.5 271.2 170 275 175C278.8 180 283.3 187.5 285 190M205 190C206.7 191 211.2 194.7 215 196C218.8 197.3 222.2 196.7 228 198C233.8 199.3 244.3 202 250 204C255.7 206 260 209 262 210M200 192C200.7 195.8 202.3 207 204 215C205.7 223 209 235.8 210 240M330 105C332.5 105.8 340 109.5 345 110C350 110.5 356.2 107.7 360 108C363.8 108.3 366.7 111.3 368 112M345 60C346.2 63.3 349.8 73.3 352 80C354.2 86.7 356.3 92.5 358 100C359.7 107.5 361.3 120.8 362 125M355 40C355.8 45 358.7 60 360 70C361.3 80 362.3 90 363 100C363.7 110 363.8 125 364 130M52 150C53.7 152 58.3 157.7 62 162C65.7 166.3 69.7 170.7 74 176C78.3 181.3 83.7 189 88 194C92.3 199 96 202.3 100 206C104 209.7 109 213 112 216C115 219 117 222.7 118 224M84 196C86.3 196.7 93.7 198.3 98 200C102.3 201.7 108 205 110 206M114 208 L116 222" fill="none" stroke="#6572f2" stroke-width="1.05" stroke-dasharray="6 4" opacity=".85"/><path d="M140.4 249.6C144.3 248.3 154.9 244.8 163.4 242.1C172 239.3 182.6 237.1 191.7 233.2C200.7 229.4 210.4 220.5 217.7 219.1C225.1 217.7 232.8 223.7 235.8 224.6M139.2 251C142.9 249.5 153 245 161.7 241.9C170.3 238.8 182.5 235.5 191 232.3C199.6 229.1 205.4 223.9 213 222.6C220.7 221.3 232.9 224.2 236.9 224.5M146.9 253.6C150.6 252.1 160.2 247.4 168.9 244.6C177.6 241.8 190.8 239.8 199.2 236.9C207.6 234 212.7 228.3 219.1 227.2C225.6 226.1 234.9 229.8 238 230.3M146.9 253.7C150.8 253.1 162.2 252.9 170.3 250.3C178.3 247.8 186.1 241.6 195.1 238.4C204.2 235.1 217.1 232.2 224.3 230.8C231.5 229.5 235.8 230.3 238.1 230.2M150.6 234.6C153.9 234 162.7 232.3 170.1 230.5C177.5 228.8 186.9 225.8 195.1 224.1C203.2 222.4 212.1 220.5 219.2 220.4C226.3 220.4 234.4 223.1 237.4 223.6M149.6 235.1C153.1 235.1 162.1 236.5 170.4 235.1C178.6 233.7 190.8 228.7 199 226.8C207.3 224.9 213.5 224.1 219.7 223.6C225.9 223.1 233.3 223.6 236 223.6M141.5 251.4C146.3 251.2 161.6 248.9 170.4 250.3C179.2 251.7 187.8 254.7 194.4 259.9C201 265.2 203.6 272.8 210.1 281.7C216.7 290.6 225.4 302.3 233.7 313.4C242 324.5 255.7 342.5 260.1 348.3M141.1 250.4C146.1 250.1 162.1 247.1 171.1 248.3C180.1 249.5 188.4 251.9 194.9 257.7C201.4 263.5 203.6 274 210.4 283.2C217.1 292.5 226.9 302.5 235.4 313.3C243.9 324.2 256.9 342.4 261.3 348.2M151.7 235.2C156.7 236.6 174.6 240.1 181.5 244.1C188.4 248 188.2 251 193.1 258.8C198.1 266.6 203.4 280.8 211.3 290.9C219.1 301 231.8 309.8 240 319.5C248.3 329.1 257.2 343.8 260.7 348.6M153.5 236.1C158.1 237.8 174.8 241.9 181.3 246.5C187.8 251.1 186.9 256.3 192.6 263.5C198.2 270.8 208 280.7 215.3 290.3C222.6 299.8 228.8 311.2 236.4 321C244 330.7 256.8 344.2 260.8 348.8M139.9 252.4C145 250.9 161.9 247.8 170.6 243.3C179.3 238.9 186.6 231.7 192 225.8C197.4 219.8 202 213.1 202.9 207.6C203.8 202 198.3 194.9 197.4 192.4M140.3 250C145.2 249.2 160.9 248.9 169.8 245.3C178.8 241.7 189.5 235.1 194 228.2C198.4 221.3 196.1 209.6 196.5 203.8C196.9 197.9 196.5 195 196.6 193.3M151.1 237C154.9 234.6 165.7 226.9 173.7 222.9C181.6 218.9 192.4 218.6 198.6 213.1C204.9 207.6 205.4 197.6 211.1 189.9C216.8 182.2 229.1 170.6 232.7 166.8M150.8 234.9C154.8 233.5 167.6 230.1 174.8 226.3C182.1 222.6 187.9 219 194.4 212.6C200.8 206.2 206.8 195.6 213.5 188C220.1 180.3 230.7 170.2 234.1 166.7M143.1 251.4C149 249.7 168.2 247.1 178.5 241C188.7 235 197.3 224 204.6 215.1C211.9 206.3 217.2 196.5 222.3 188.1C227.5 179.6 233.3 168.2 235.5 164.3M143.2 251.2C148 249.5 162 246.5 172 240.9C182 235.4 193.8 226.8 203.1 217.8C212.4 208.9 222.2 195.9 227.5 187C232.9 178.1 233.9 168.3 235.2 164.5M197.1 190.9C199.8 193.3 208.4 200.6 213 205.5C217.7 210.3 220.7 217.1 224.8 220C229 222.9 235.7 222.6 237.9 223.1M196.8 191.8C198.9 194 204.5 200.2 209.5 204.8C214.4 209.3 221.8 216.2 226.6 219.2C231.4 222.2 236.5 222.2 238.5 222.8M235.7 163.5C236.8 166.8 242.2 176.4 242.5 183.2C242.9 190.1 238.6 198.3 237.8 204.6C237 211 237.8 218.6 237.8 221.3M235.2 165.3C236 169 238.8 181.4 239.6 187.5C240.5 193.6 240.4 195.9 240.4 201.9C240.3 207.8 239.6 219.5 239.5 223M199.4 193.3C202.4 196.5 212.7 203.5 217.4 212.7C222.2 221.8 224.9 236.2 227.9 248C230.9 259.8 234.4 277.7 235.7 283.7M197.6 193.5C200.3 197.4 208.3 207.7 213.4 217C218.4 226.3 223.7 237.9 227.7 249.5C231.7 261 235.8 280.3 237.4 286.5M238.2 224.7C236.1 228.6 226.7 239.3 225.6 248.6C224.4 257.9 228.8 270 231.3 280.6C233.7 291.1 236.1 303.1 240.3 311.7C244.5 320.4 253.9 328.8 256.7 332.3M238 225.1C235.9 229.8 227.8 244.4 225.6 253.2C223.4 262 222.6 268.1 225.1 277.8C227.6 287.5 235.3 302.4 240.7 311.2C246 320.1 254.4 327.6 257.2 330.9M121.2 223.2C122.1 226.2 123.9 236.3 126.7 240.8C129.4 245.3 135.9 248.7 137.8 250.3M120.1 225.3C120.7 228 121.1 237.4 123.9 241.5C126.8 245.6 135 248.3 137.2 249.7M150.5 235.4C149.5 237.1 146.3 243.2 144.7 245.8C143.1 248.3 141.4 250 140.7 250.9M151.5 237.5C150.1 238.2 144.7 239.5 143 242C141.3 244.5 141.6 250.6 141.3 252.3M239.1 289.1C235 286.4 221.1 276.9 214.1 272.6C207.1 268.3 204.6 267 197.3 263.4C190.1 259.9 179.3 253.4 170.8 251.4C162.3 249.4 150.5 251.5 146.5 251.5M239 287.4C235.2 285.8 223.9 282.8 216.1 278.1C208.4 273.4 200.6 264.3 192.4 259.3C184.3 254.4 175.1 249.4 167.2 248.4C159.4 247.4 149 252.5 145.3 253.3M198.7 191.1C204 189 219.9 183.1 230.9 178.3C242 173.6 254.1 168.9 264.9 162.8C275.8 156.7 290.9 145.3 296 141.8M197.8 191.3C202.6 189.8 215.2 187.4 226.5 181.9C237.9 176.4 254.4 164.8 266 158.3C277.5 151.9 290.8 145.7 295.7 143.2M235.8 162.5C241 162.6 255.9 162.2 267 162.7C278.2 163.1 293.5 164.7 302.8 165.3C312.2 165.9 319.6 166.1 323 166.2M234.9 162.9C240.6 162.9 257.5 162 268.7 162.8C279.8 163.6 293 167.1 302.1 167.5C311.2 167.9 319.7 165.5 323.2 165.1M261.2 347.8C256.4 350.3 243.9 358.5 232 362.7C220 366.9 203.4 368.6 189.3 372.8C175.3 377.1 162.3 383.2 147.6 388C132.9 392.8 108.8 399.2 101.1 401.4M262.9 350.1C256.9 352.1 239 357.5 226.7 361.7C214.3 365.8 201.3 370.7 188.8 375C176.4 379.3 166.8 383.5 152.1 387.5C137.5 391.6 109.5 397.3 100.9 399.3M262.9 347.8C259.5 346.9 250.9 350.1 242.6 342.5C234.3 334.9 219.4 316.2 213.1 302.2C206.7 288.2 205.7 271 204.7 258.6C203.7 246.3 205.6 237.2 207.1 228.1C208.5 219 212.5 208.1 213.6 204.1M261.5 350.1C258.4 348.2 250.9 346.9 243.3 338.5C235.7 330 221.8 312.3 216 299.3C210.2 286.3 209.7 272.3 208.4 260.3C207 248.3 206.7 236.7 208.1 227.3C209.4 217.9 215 207.9 216.4 204" fill="none" stroke="#6572f2" stroke-width="1" stroke-dasharray="6 4.5" opacity=".75"/><g font-family="'DejaVu Sans','Liberation Sans',sans-serif" fill="#333" stroke="#fff" stroke-width="1.6" stroke-linejoin="round" paint-order="stroke" stroke-opacity=".85" style="filter:grayscale(1)"><text x="136.7" y="14.32" font-size="12" text-anchor="middle" textLength="61" lengthAdjust="spacingAndGlyphs">Kâğıthane</text><text x="61" y="27.6" font-size="10" text-anchor="middle" textLength="48" lengthAdjust="spacingAndGlyphs">Alibeyköy</text><text x="67.3" y="55.6" font-size="10" text-anchor="middle" textLength="64" lengthAdjust="spacingAndGlyphs">Emniyettepe</text><text x="136" y="51.6" font-size="10" text-anchor="middle" textLength="32.5" lengthAdjust="spacingAndGlyphs">Gürsel</text><text x="109.6" y="81.6" font-size="10" text-anchor="middle" textLength="47.5" lengthAdjust="spacingAndGlyphs">Talatpaşa</text><text x="167" y="81.32" font-size="12" text-anchor="middle" textLength="21.5" lengthAdjust="spacingAndGlyphs">Şişli</text><text x="115.5" y="116.6" font-size="10" text-anchor="middle" textLength="80" lengthAdjust="spacingAndGlyphs">Mahmut Şevket</text><text x="115.3" y="130.6" font-size="10" text-anchor="middle" textLength="23" lengthAdjust="spacingAndGlyphs">Paşa</text><text x="206" y="52.1" font-size="10" text-anchor="middle" textLength="64" lengthAdjust="spacingAndGlyphs">Mecidiyeköy</text><text x="233.7" y="85.6" font-size="10" text-anchor="middle" textLength="57" lengthAdjust="spacingAndGlyphs">Gayrettepe</text><text x="316.4" y="84.6" font-size="10" text-anchor="middle" textLength="57" lengthAdjust="spacingAndGlyphs">Kuruçeşme</text><text x="206" y="124.6" font-size="10" text-anchor="middle" textLength="44" lengthAdjust="spacingAndGlyphs">Teşvikiye</text><text x="275" y="124.2" font-size="10" text-anchor="middle" textLength="44" lengthAdjust="spacingAndGlyphs">Mecidiye</text><text x="222.7" y="141.4" font-size="10" text-anchor="middle" textLength="33.5" lengthAdjust="spacingAndGlyphs">Türkali</text><text x="237.8" y="161.12" font-size="12" text-anchor="middle" textLength="50" lengthAdjust="spacingAndGlyphs">Beşiktaş</text><text x="29.6" y="158.1" font-size="10" text-anchor="middle" textLength="36.5" lengthAdjust="spacingAndGlyphs">Nişancı</text><text x="48.6" y="178.6" font-size="10" text-anchor="middle" textLength="57.5" lengthAdjust="spacingAndGlyphs">Ayvansaray</text><text x="159.3" y="151.2" font-size="10" text-anchor="middle" textLength="44" lengthAdjust="spacingAndGlyphs">Eskişehir</text><text x="134.6" y="176.3" font-size="10" text-anchor="middle" textLength="76.5" lengthAdjust="spacingAndGlyphs">Sururi Mehmet</text><text x="135" y="190.6" font-size="10" text-anchor="middle" textLength="32" lengthAdjust="spacingAndGlyphs">Efendi</text><text x="38.7" y="211.2" font-size="10" text-anchor="middle" textLength="47" lengthAdjust="spacingAndGlyphs">Derviş Ali</text><text x="138.8" y="217.92" font-size="12" text-anchor="middle" textLength="48.5" lengthAdjust="spacingAndGlyphs">Beyoğlu</text><text x="42" y="231.3" font-size="10" text-anchor="middle" textLength="60" lengthAdjust="spacingAndGlyphs">Hırka-i Şerif</text><text x="132" y="234.6" font-size="10" text-anchor="middle" textLength="53" lengthAdjust="spacingAndGlyphs">Arap Cami</text><text x="64" y="251.32" font-size="12" text-anchor="middle" textLength="29.5" lengthAdjust="spacingAndGlyphs">Fatih</text><text x="95.5" y="269.6" font-size="10" text-anchor="middle" textLength="71.5" lengthAdjust="spacingAndGlyphs">Kalenderhane</text><text x="315.4" y="215.6" font-size="10" text-anchor="middle" textLength="36.5" lengthAdjust="spacingAndGlyphs">İcadiye</text><text x="259.8" y="224.82" font-size="12" text-anchor="middle" textLength="50" lengthAdjust="spacingAndGlyphs">Üsküdar</text><text x="294" y="254.4" font-size="10" text-anchor="middle" textLength="59" lengthAdjust="spacingAndGlyphs">Valide-i Atik</text><text x="56" y="289.6" font-size="10" text-anchor="middle" textLength="70" lengthAdjust="spacingAndGlyphs">Haseki Sultan</text><text x="145.3" y="303" font-size="15" text-anchor="middle" textLength="57" lengthAdjust="spacingAndGlyphs">İstanbul</text><text x="307.3" y="276.9" font-size="10" text-anchor="middle" textLength="46.5" lengthAdjust="spacingAndGlyphs">Barbaros</text><text x="267.4" y="302.6" font-size="10" text-anchor="middle" textLength="42.5" lengthAdjust="spacingAndGlyphs">Selimiye</text><text x="292.8" y="336.6" font-size="10" text-anchor="middle" textLength="55.5" lengthAdjust="spacingAndGlyphs">Rasimpaşa</text><text x="287.2" y="360.32" font-size="12" text-anchor="middle" textLength="47" lengthAdjust="spacingAndGlyphs">Kadıköy</text><text x="287.6" y="384.6" font-size="10" text-anchor="middle" textLength="46.5" lengthAdjust="spacingAndGlyphs">Caferağa</text><text x="203" y="23.6" font-size="10" textLength="46" lengthAdjust="spacingAndGlyphs">Ortabayır</text><text x="295" y="44.6" font-size="10" textLength="29.5" lengthAdjust="spacingAndGlyphs">Kültür</text><text x="0" y="142.32" font-size="12" textLength="52.5" lengthAdjust="spacingAndGlyphs">üpsultan</text><text x="0" y="76.6" font-size="10" textLength="42" lengthAdjust="spacingAndGlyphs">dıztabya</text><text x="0" y="102.6" font-size="10" textLength="7" lengthAdjust="spacingAndGlyphs">a</text><text x="325" y="164.1" font-size="10" textLength="56" lengthAdjust="spacingAndGlyphs">Beylerbeyi</text><text x="343.3" y="215" font-size="10" textLength="52" lengthAdjust="spacingAndGlyphs">Burhaniye</text><text x="360" y="190.6" font-size="10" textLength="30" lengthAdjust="spacingAndGlyphs">Kuleli</text><text x="317.5" y="311" font-size="10" textLength="51" lengthAdjust="spacingAndGlyphs">Acıbadem</text><text x="335.7" y="395.2" font-size="10" textLength="50" lengthAdjust="spacingAndGlyphs">Feneryolu</text><text x="345.5" y="129.6" font-size="10" textLength="55" lengthAdjust="spacingAndGlyphs">Çengelköy</text><text x="-1" y="327" font-size="10" textLength="63" lengthAdjust="spacingAndGlyphs">Mustafapaşa</text><text x="-4" y="347.4" font-size="10" textLength="21.5" lengthAdjust="spacingAndGlyphs">kule</text><text x="-1" y="269.6" font-size="10" textLength="15.5" lengthAdjust="spacingAndGlyphs">ndi</text><text x="363" y="352.6" font-size="10" textLength="8" lengthAdjust="spacingAndGlyphs">D</text><text x="364" y="44.6" font-size="10" textLength="7" lengthAdjust="spacingAndGlyphs">K</text><text x="356" y="61.6" font-size="10" textLength="11" lengthAdjust="spacingAndGlyphs">oy</text></g><g font-family="'DejaVu Sans','Liberation Sans',sans-serif" font-style="italic" font-size="8" fill="#b5142c" stroke="#fff" stroke-width="1.2" paint-order="stroke" stroke-opacity=".7" text-anchor="middle" opacity=".99"><text x="90" y="44">K-31</text><text x="132" y="70">K-8</text><text x="171" y="64">K-8</text><text x="106" y="102">K-7</text><text x="278" y="107.7">K-10</text><text x="344" y="189.3">K-11</text><text x="363" y="250.8">K-1</text><text x="366" y="337.7">K-</text><text x="322" y="376.4">K-</text></g><g transform="translate(167.2 165.1) scale(1.458)"><path fill="#ffcc00" d="M4 16c0 .880.390 1.670 1 2.220V20c0 .550.450 1 1 1h1c.550 0 1-.450 1-1v-1h8v1c0 .550.450 1 1 1h1c.550 0 1-.450 1-1v-1.780c.610-.550 1-1.340 1-2.220V6c0-3.500-3.580-4-8-4s-8 .500-8 4v10zm3.500 1c-.830 0-1.500-.670-1.500-1.500S6.670 14 7.500 14s1.500.670 1.500 1.500S8.330 17 7.500 17zm9 0c-.830 0-1.500-.670-1.500-1.500s.670-1.500 1.500-1.500 1.500.670 1.500 1.500-.670 1.500-1.500 1.500zm1.500-6H6V6h12v5z"/></g></svg>
    <div class="mbtn" id="b1">TAM EKRAN</div>
    <div class="mbtn" id="b2"><svg viewBox="0 0 24 24" width="16" height="16"><path fill="#4285f4" d="M12 2C8.130 2 5 5.130 5 9c0 5.250 7 13 7 13s7-7.750 7-13c0-3.870-3.130-7-7-7zm0 9.500a2.500 2.500 0 010-5 2.500 2.500 0 010 5z"/></svg><span>YOL TARİFİ</span></div>
    <div id="zoomc"><div class="zb" id="zin"><span>+</span></div><div class="zb" id="zout"><span>&#8722;</span></div></div>
  </div>
</div>

<div class="card" id="c2">
  <div class="title">Aracın Görevleri</div>
  <div id="thead"><span class="c-a">Hat</span><span class="c-b">Kalkış</span><span class="c-c">Saat</span></div>
  <div class="row odd" style="top:64px;height:37px"><span class="c-a">29C</span><span class="c-b">TARABYAÜSTÜ</span><span class="c-c">07:19</span></div>
  <div class="row lo" style="top:102px"><span class="c-a">29C</span><span class="c-b">TARABYAÜSTÜ</span><span class="c-c">10:00</span></div>
  <div class="row odd lo" style="top:139px"><span class="c-a">29C</span><span class="c-b">TARABYAÜSTÜ</span><span class="c-c">12:34</span></div>
  <div class="row lo" style="top:176px"><span class="c-a">29C</span><span class="c-b">TARABYAÜSTÜ</span><span class="c-c">15:10</span></div>
  <div class="row odd lo" style="top:213px"><span class="c-a">29C</span><span class="c-b">TARABYAÜSTÜ</span><span class="c-c">17:30</span></div>
</div>

<div class="card" id="c3">
  <div class="title" style="letter-spacing:0.07px">Aracın Teknik Özellikleri</div>
  <div class="feat" style="left:61.8px"><svg viewBox="0 0 24 24" fill="#d32f2f" style="position:relative;left:-1px"><circle cx="18" cy="4.54" r="2"/><path d="M15 17h-2c0 1.650-1.350 3-3 3s-3-1.350-3-3 1.350-3 3-3v-2c-2.760 0-5 2.240-5 5s2.240 5 5 5 5-2.240 5-5zm3-3.500h-1.860l1.670-3.670C18.420 8.500 17.440 7 15.960 7h-5.200c-.810 0-1.540.470-1.870 1.200L8.220 10l1.920.530.650-1.530H13l-1.830 4.100c-.600 1.330.390 2.900 1.850 2.900H18v5h2v-5.500c0-1.100-.900-2-2-2z"/></svg><div style="letter-spacing:0.62px">Engelli Desteği</div></div>
  <div class="feat" style="left:131.85px"><svg viewBox="0 0 24 24" fill="#d32f2f"><path d="M22 11h-4.170l3.240-3.240-1.410-1.420L15 11h-2V9l4.660-4.660-1.420-1.410L13 6.170V2h-2v4.170L7.760 2.930 6.340 4.340 11 9v2H9L4.340 6.340 2.930 7.760 6.170 11H2v2h4.170l-3.240 3.240 1.410 1.420L9 13h2v2l-4.660 4.660 1.420 1.410L11 17.830V22h2v-4.170l3.240 3.240 1.420-1.410L13 15v-2h2l4.660 4.660 1.410-1.420L17.830 13H22z"/></svg><div style="letter-spacing:0.8px">Klima</div></div>
  <div class="feat" style="left:203.4px"><svg viewBox="0 0 24 24" fill="#d32f2f" style="position:relative;left:1px"><path d="M15.500 5.500c1.100 0 2-.900 2-2s-.900-2-2-2-2 .900-2 2 .900 2 2 2zM5 12c-2.800 0-5 2.200-5 5s2.200 5 5 5 5-2.200 5-5-2.200-5-5-5zm0 8.500c-1.900 0-3.500-1.600-3.500-3.500s1.600-3.500 3.500-3.500 3.500 1.600 3.500 3.500-1.600 3.500-3.500 3.500zm5.800-10l2.400-2.400.8.800c1.300 1.300 3 2.100 5.100 2.100V9c-1.500 0-2.700-.600-3.600-1.500l-1.900-1.900c-.500-.400-1-.600-1.600-.600s-1.100.200-1.400.600L7.800 8.400c-.400.400-.600.900-.600 1.400 0 .600.200 1.100.600 1.400L11 14v5h2v-6.200l-2.200-2.300zM19 12c-2.800 0-5 2.200-5 5s2.200 5 5 5 5-2.200 5-5-2.200-5-5-5zm0 8.500c-1.900 0-3.500-1.600-3.500-3.500s1.600-3.500 3.500-3.500 3.500 1.600 3.500 3.500-1.600 3.500-3.500 3.500z"/></svg><div style="letter-spacing:0.7px">Bisiklet Taşıma</div></div>
  <div class="feat" style="left:283.3px"><svg viewBox="0 0 24 24" fill="#2e7d32"><path d="M17 5v16c0 .550-.450 1-1 1H8c-.550 0-1-.450-1-1V5c0-.550.450-1 1-1h2V2h4v2h2c.550 0 1 .450 1 1zm-2 1H9v4h6V6z"/></svg><div style="letter-spacing:0.55px">USB Şarj</div></div>
  <div class="feat" style="left:334.1px"><svg viewBox="0 0 24 24" fill="#d32f2f"><path d="M18 9.980L6 22h16V5.970l-4 4.010zM20 20h-2v-7.220l2-2V20zM5.220 7.220L3.930 5.930c3.900-3.910 10.240-3.910 14.150 0l-1.290 1.290c-3.190-3.190-8.380-3.190-11.570 0zm7.710 3.850L11 13l-1.930-1.930c1.070-1.060 2.790-1.060 3.860 0zm1.290-1.280c-1.780-1.770-4.660-1.770-6.430 0L6.500 8.500c2.480-2.480 6.520-2.480 9 0l-1.280 1.290z"/></svg><div style="letter-spacing:0.5px">WiFi</div></div>
</div>

<div class="card" id="c4">
  <div class="title" style="letter-spacing:-0.7px">OPERATOR BİLGİSİ</div>
  <div class="title" style="top:24px;font-weight:bold;letter-spacing:-0.62px">ELİT KARAYOLU YOLCU TAŞIMA</div>
</div>

<div id="bar">A-1805 - 34 HO 2041</div>
<div id="foot"></div>

</body>
</html>
